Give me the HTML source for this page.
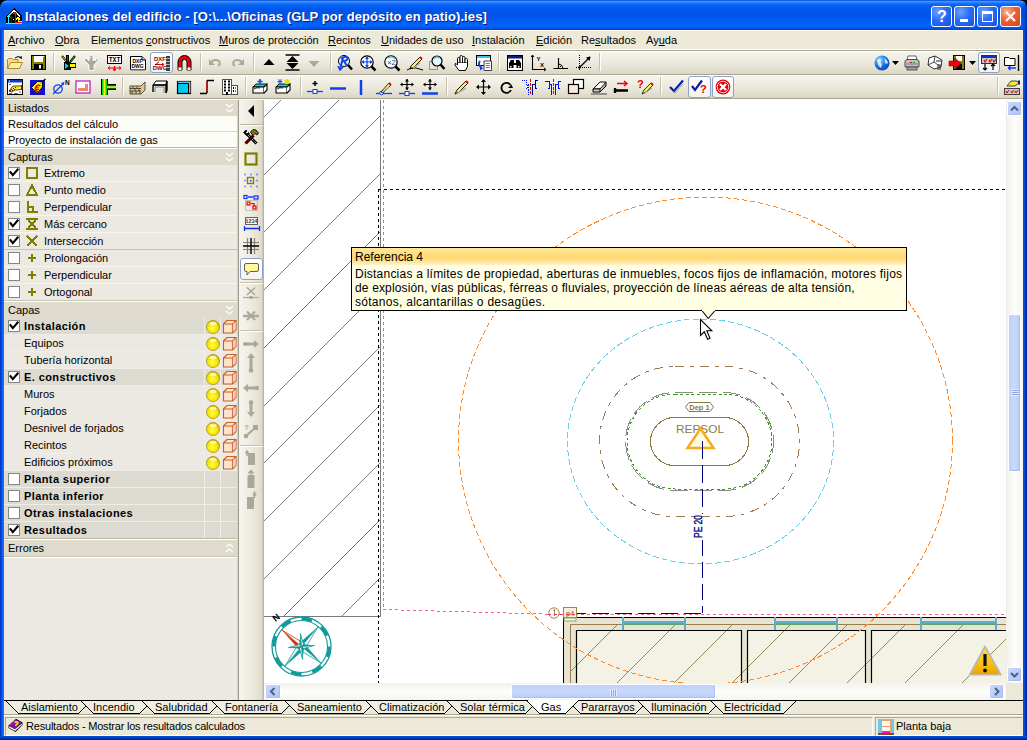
<!DOCTYPE html>
<html><head><meta charset="utf-8"><style>
*{margin:0;padding:0;box-sizing:border-box}
html,body{width:1027px;height:740px;overflow:hidden;background:#ECE9D8;font-family:"Liberation Sans", sans-serif;font-size:11px;color:#000;position:relative}
.a{position:absolute}
.t{position:absolute;white-space:nowrap}
.u{text-decoration:underline;text-underline-offset:1px}
svg{position:absolute;overflow:visible}
</style></head><body>

<div class="a" style="left:0;top:0;width:7px;height:7px;background:#000"></div>
<div class="a" style="left:1020px;top:0;width:7px;height:7px;background:#000"></div>
<div class="a" style="left:0;top:0;width:1027px;height:30px;background:linear-gradient(to bottom,#0040D0 0px,#3D95FF 1.5px,#0B6AF5 4px,#0058EE 8px,#0054E9 16px,#0061F7 24px,#0066FF 26px,#0055E5 28px,#003DD7 30px);border-radius:8px 8px 0 0"></div>
<div class="a" style="left:1021px;top:3px;width:6px;height:27px;background:linear-gradient(to right,rgba(0,40,180,0) 0px,rgba(0,30,150,0.6) 6px);border-top-right-radius:4px"></div>
<div class="a" style="left:0;top:30px;width:4px;height:710px;background:linear-gradient(to right,#0026B0 0px,#0049D9 1px,#0059F0 2px,#1A6CF6 3px,#1A6CF6 4px)"></div>
<div class="a" style="left:1023px;top:30px;width:4px;height:710px;background:linear-gradient(to right,#0058EE 0px,#0040C8 2px,#001E9A 4px)"></div>
<div class="a" style="left:0;top:736px;width:1027px;height:4px;background:linear-gradient(to bottom,#0050E0 0px,#003BC0 2px,#001A90 4px)"></div>
<svg style="left:6px;top:8px" width="16" height="16" viewBox="0 0 16 16" shape-rendering="crispEdges">
<path d="M0 15 V8 L8 0 L16 8 V15 Z" fill="#000"/>
<path d="M2.5 8 L8 2.5 L14 8.5" stroke="#fff" stroke-width="1.5" fill="none"/>
<path d="M2.5 8 L6 4.5" stroke="#20FFFF" stroke-width="1.5" fill="none"/>
<rect x="5" y="11" width="1" height="1" fill="#fff"/><rect x="7" y="11" width="1" height="1" fill="#fff"/><rect x="10" y="11" width="1" height="1" fill="#fff"/><rect x="13" y="11" width="1" height="1" fill="#fff"/>
<path d="M9 3.5 L7 6 H11 Z" fill="#f00"/><rect x="8.5" y="6" width="1.2" height="9" fill="#f00"/><rect x="8.5" y="14" width="7.5" height="1" fill="#f00"/>
<path d="M5.5 8 L3.8 10 H7.2 Z" fill="#1010ff"/><rect x="5" y="10" width="1.2" height="5" fill="#1010ff"/>
<path d="M12 8.5 L10.3 10.5 H13.7 Z" fill="#ffff00"/><rect x="11.5" y="10.5" width="1.2" height="3" fill="#ffff00"/><rect x="11.5" y="13" width="4.5" height="1" fill="#ffff00"/>
<path d="M2.5 6.5 L0.8 8.5 H4.2 Z" fill="#20FFFF"/><rect x="2" y="8.5" width="1.2" height="6.5" fill="#20FFFF"/>
<rect x="0" y="15" width="16" height="1" fill="#20FFFF"/>
</svg>
<div class="t" style="left:25px;top:9px;font-size:13px;line-height:15px;font-weight:bold;color:#fff;text-shadow:1px 1px 0 #0A1E7A;letter-spacing:0.1px">Instalaciones del edificio - [O:\...\Oficinas (GLP por depósito en patio).ies]</div>
<div class="a" style="left:931px;top:6px;width:21px;height:21px;border:1px solid #fff;border-radius:3px;background:radial-gradient(circle at 30% 25%,#6FA0FF 0%,#2A6CF4 45%,#1650E0 100%)"><div class="t" style="left:5px;top:1px;font-size:16px;line-height:18px;font-weight:bold;color:#fff">?</div></div>
<div class="a" style="left:954px;top:6px;width:21px;height:21px;border:1px solid #fff;border-radius:3px;background:radial-gradient(circle at 30% 25%,#6FA0FF 0%,#2A6CF4 45%,#1650E0 100%)"><div class="a" style="left:5px;top:12px;width:8px;height:3px;background:#fff"></div></div>
<div class="a" style="left:977px;top:6px;width:21px;height:21px;border:1px solid #fff;border-radius:3px;background:radial-gradient(circle at 30% 25%,#6FA0FF 0%,#2A6CF4 45%,#1650E0 100%)"><div class="a" style="left:4px;top:4px;width:11px;height:11px;border:1px solid #fff;border-top-width:3px"></div></div>
<div class="a" style="left:1000px;top:6px;width:21px;height:21px;border:1px solid #fff;border-radius:3px;background:radial-gradient(circle at 30% 25%,#F8B090 0%,#E8613A 45%,#D2421B 100%)"><svg style="left:4px;top:4px" width="11" height="11"><path d="M1 1 L10 10 M10 1 L1 10" stroke="#fff" stroke-width="2.2"/></svg></div>
<div class="a" style="left:4px;top:30px;width:1019px;height:19px;background:#ECE9D8"></div>
<div class="a" style="left:4px;top:30px;width:1019px;height:1px;background:#FFFBF0"></div>
<div class="t" style="left:8px;top:34.69px;font-size:11px;line-height:11px;font-weight:normal;color:#000;"><span class="u">A</span>rchivo</div>
<div class="t" style="left:55px;top:34.69px;font-size:11px;line-height:11px;font-weight:normal;color:#000;"><span class="u">O</span>bra</div>
<div class="t" style="left:91px;top:34.69px;font-size:11px;line-height:11px;font-weight:normal;color:#000;">Elementos <span class="u">c</span>onstructivos</div>
<div class="t" style="left:219px;top:34.69px;font-size:11px;line-height:11px;font-weight:normal;color:#000;"><span class="u">M</span>uros de protección</div>
<div class="t" style="left:328px;top:34.69px;font-size:11px;line-height:11px;font-weight:normal;color:#000;"><span class="u">R</span>ecintos</div>
<div class="t" style="left:381px;top:34.69px;font-size:11px;line-height:11px;font-weight:normal;color:#000;"><span class="u">U</span>nidades de uso</div>
<div class="t" style="left:472px;top:34.69px;font-size:11px;line-height:11px;font-weight:normal;color:#000;"><span class="u">I</span>nstalación</div>
<div class="t" style="left:536px;top:34.69px;font-size:11px;line-height:11px;font-weight:normal;color:#000;"><span class="u">E</span>dición</div>
<div class="t" style="left:581px;top:34.69px;font-size:11px;line-height:11px;font-weight:normal;color:#000;">Re<span class="u">s</span>ultados</div>
<div class="t" style="left:646px;top:34.69px;font-size:11px;line-height:11px;font-weight:normal;color:#000;">Ay<span class="u">u</span>da</div>
<div class="a" style="left:4px;top:49px;width:1019px;height:1px;background:#FFFFFF"></div>
<div class="a" style="left:4px;top:50px;width:1019px;height:1px;background:#A9A592"></div>
<div class="a" style="left:4px;top:51px;width:1019px;height:1px;background:#FFFFFF"></div>
<div class="a" style="left:4px;top:52px;width:1019px;height:22px;background:linear-gradient(to bottom,#F5F4EC 0%,#EFEDE2 35%,#E6E3D5 70%,#DAD6C4 100%)"></div>
<div class="a" style="left:4px;top:74px;width:1019px;height:1px;background:#A9A592"></div>
<div class="a" style="left:4px;top:75px;width:1019px;height:1px;background:#FFFFFF"></div>
<div class="a" style="left:4px;top:76px;width:1019px;height:22px;background:linear-gradient(to bottom,#F5F4EC 0%,#EFEDE2 35%,#E6E3D5 70%,#DAD6C4 100%)"></div>
<div class="a" style="left:4px;top:98px;width:1019px;height:1px;background:#A9A592"></div>
<div class="a" style="left:4px;top:99px;width:1019px;height:1px;background:#FFFFFF"></div>
<div class="a" style="left:4px;top:100px;width:234px;height:600px;background:#EBE9E2"></div>
<div class="a" style="left:237px;top:100px;width:1px;height:600px;background:#D6D2C2"></div>
<div class="a" style="left:238px;top:100px;width:1px;height:600px;background:#A09C8C"></div>
<div class="a" style="left:4px;top:100px;width:233px;height:16px;background:#DEDBCD"></div>
<div class="t" style="left:8px;top:102.69px;font-size:11px;line-height:11px;font-weight:normal;color:#000;">Listados</div>
<svg style="left:225px;top:103px" width="10" height="11"><path d="M1 1 L4.5 4 L8 1 M1 6 L4.5 9 L8 6" stroke="#fff" stroke-width="1.3" fill="none"/></svg>
<div class="a" style="left:4px;top:116px;width:233px;height:32px;background:#FDFDF8"></div>
<div class="a" style="left:4px;top:131px;width:233px;height:1px;background:#DCD8C8"></div>
<div class="a" style="left:4px;top:147px;width:233px;height:1px;background:#BEB9A6"></div>
<div class="t" style="left:8px;top:118.69px;font-size:11px;line-height:11px;font-weight:normal;color:#000;">Resultados del cálculo</div>
<div class="t" style="left:8px;top:134.69px;font-size:11px;line-height:11px;font-weight:normal;color:#000;">Proyecto de instalación de gas</div>
<div class="a" style="left:4px;top:148px;width:233px;height:1px;background:#FFFFFF"></div>
<div class="a" style="left:4px;top:149px;width:233px;height:16px;background:#DEDBCD"></div>
<div class="t" style="left:8px;top:151.69px;font-size:11px;line-height:11px;font-weight:normal;color:#000;">Capturas</div>
<svg style="left:225px;top:152px" width="10" height="11"><path d="M1 1 L4.5 4 L8 1 M1 6 L4.5 9 L8 6" stroke="#fff" stroke-width="1.3" fill="none"/></svg>
<div class="a" style="left:4px;top:165px;width:233px;height:16px;background:#EBE9E1"></div>
<div class="a" style="left:4px;top:181px;width:233px;height:1px;background:#F7F5EC"></div>
<div class="a" style="left:8px;top:167px;width:12px;height:12px;border:1px solid #858585;background:#fff"></div>
<svg style="left:8px;top:167px" width="12" height="12"><path d="M2.5 5.2 L4.8 8.2 L9.6 2.6" stroke="#000" stroke-width="2.1" fill="none" stroke-linecap="square"/></svg>
<svg style="left:26px;top:167px" width="12" height="12" shape-rendering="crispEdges"><rect x="1" y="1" width="10" height="10" fill="none" stroke="#808000" stroke-width="2"/></svg>
<div class="t" style="left:44px;top:167.69px;font-size:11px;line-height:11px;font-weight:normal;color:#000;">Extremo</div>
<div class="a" style="left:4px;top:182px;width:233px;height:16px;background:#EBE9E1"></div>
<div class="a" style="left:4px;top:198px;width:233px;height:1px;background:#F7F5EC"></div>
<div class="a" style="left:8px;top:184px;width:12px;height:12px;border:1px solid #858585;background:#fff"></div>
<svg style="left:26px;top:184px" width="12" height="12" shape-rendering="crispEdges"><path d="M6 1.5 L11 11 H1 Z" fill="none" stroke="#808000" stroke-width="2" stroke-linejoin="miter"/></svg>
<div class="t" style="left:44px;top:184.69px;font-size:11px;line-height:11px;font-weight:normal;color:#000;">Punto medio</div>
<div class="a" style="left:4px;top:199px;width:233px;height:16px;background:#EBE9E1"></div>
<div class="a" style="left:4px;top:215px;width:233px;height:1px;background:#F7F5EC"></div>
<div class="a" style="left:8px;top:201px;width:12px;height:12px;border:1px solid #858585;background:#fff"></div>
<svg style="left:26px;top:201px" width="12" height="12" shape-rendering="crispEdges"><path d="M2 0 V11 H12 M2 6 H7 V11" fill="none" stroke="#808000" stroke-width="2"/></svg>
<div class="t" style="left:44px;top:201.69px;font-size:11px;line-height:11px;font-weight:normal;color:#000;">Perpendicular</div>
<div class="a" style="left:4px;top:216px;width:233px;height:16px;background:#EBE9E1"></div>
<div class="a" style="left:4px;top:232px;width:233px;height:1px;background:#F7F5EC"></div>
<div class="a" style="left:8px;top:218px;width:12px;height:12px;border:1px solid #858585;background:#fff"></div>
<svg style="left:8px;top:218px" width="12" height="12"><path d="M2.5 5.2 L4.8 8.2 L9.6 2.6" stroke="#000" stroke-width="2.1" fill="none" stroke-linecap="square"/></svg>
<svg style="left:26px;top:218px" width="12" height="12" shape-rendering="crispEdges"><path d="M0 1 H12 M0 11 H12 M2 1.5 L10 10.5 M10 1.5 L2 10.5" fill="none" stroke="#808000" stroke-width="2"/></svg>
<div class="t" style="left:44px;top:218.69px;font-size:11px;line-height:11px;font-weight:normal;color:#000;">Más cercano</div>
<div class="a" style="left:4px;top:233px;width:233px;height:16px;background:#EBE9E1"></div>
<div class="a" style="left:4px;top:249px;width:233px;height:1px;background:#C8C4B4"></div>
<div class="a" style="left:8px;top:235px;width:12px;height:12px;border:1px solid #858585;background:#fff"></div>
<svg style="left:8px;top:235px" width="12" height="12"><path d="M2.5 5.2 L4.8 8.2 L9.6 2.6" stroke="#000" stroke-width="2.1" fill="none" stroke-linecap="square"/></svg>
<svg style="left:26px;top:235px" width="12" height="12" shape-rendering="crispEdges"><path d="M1 1 L11 11 M11 1 L1 11" fill="none" stroke="#808000" stroke-width="2"/></svg>
<div class="t" style="left:44px;top:235.69px;font-size:11px;line-height:11px;font-weight:normal;color:#000;">Intersección</div>
<div class="a" style="left:4px;top:250px;width:233px;height:16px;background:#EBE9E1"></div>
<div class="a" style="left:4px;top:266px;width:233px;height:1px;background:#F7F5EC"></div>
<div class="a" style="left:8px;top:252px;width:12px;height:12px;border:1px solid #858585;background:#fff"></div>
<svg style="left:26px;top:252px" width="12" height="12" shape-rendering="crispEdges"><path d="M6 2 V10 M2 6 H10" fill="none" stroke="#808000" stroke-width="2"/></svg>
<div class="t" style="left:44px;top:252.69px;font-size:11px;line-height:11px;font-weight:normal;color:#000;">Prolongación</div>
<div class="a" style="left:4px;top:267px;width:233px;height:16px;background:#EBE9E1"></div>
<div class="a" style="left:4px;top:283px;width:233px;height:1px;background:#F7F5EC"></div>
<div class="a" style="left:8px;top:269px;width:12px;height:12px;border:1px solid #858585;background:#fff"></div>
<svg style="left:26px;top:269px" width="12" height="12" shape-rendering="crispEdges"><path d="M6 2 V10 M2 6 H10" fill="none" stroke="#808000" stroke-width="2"/></svg>
<div class="t" style="left:44px;top:269.69px;font-size:11px;line-height:11px;font-weight:normal;color:#000;">Perpendicular</div>
<div class="a" style="left:4px;top:284px;width:233px;height:16px;background:#EBE9E1"></div>
<div class="a" style="left:4px;top:300px;width:233px;height:1px;background:#F7F5EC"></div>
<div class="a" style="left:8px;top:286px;width:12px;height:12px;border:1px solid #858585;background:#fff"></div>
<svg style="left:26px;top:286px" width="12" height="12" shape-rendering="crispEdges"><path d="M6 2 V10 M2 6 H10" fill="none" stroke="#808000" stroke-width="2"/></svg>
<div class="t" style="left:44px;top:286.69px;font-size:11px;line-height:11px;font-weight:normal;color:#000;">Ortogonal</div>
<div class="a" style="left:4px;top:300px;width:233px;height:1px;background:#C8C4B4"></div>
<div class="a" style="left:4px;top:301px;width:233px;height:1px;background:#FFFFFF"></div>
<div class="a" style="left:4px;top:302px;width:233px;height:16px;background:#DEDBCD"></div>
<div class="t" style="left:8px;top:304.69px;font-size:11px;line-height:11px;font-weight:normal;color:#000;">Capas</div>
<svg style="left:225px;top:305px" width="10" height="11"><path d="M1 1 L4.5 4 L8 1 M1 6 L4.5 9 L8 6" stroke="#fff" stroke-width="1.3" fill="none"/></svg>
<div class="a" style="left:4px;top:318px;width:201px;height:16px;background:#DCDAD1"></div>
<div class="a" style="left:205px;top:318px;width:16px;height:16px;background:#DCDAD1"></div>
<div class="a" style="left:221px;top:318px;width:16px;height:16px;background:#DCDAD1"></div>
<div class="a" style="left:204px;top:318px;width:1px;height:17px;background:#EFEDE5"></div>
<div class="a" style="left:220px;top:318px;width:1px;height:17px;background:#EFEDE5"></div>
<div class="a" style="left:4px;top:334px;width:233px;height:1px;background:#EFEDE5"></div>
<div class="a" style="left:8px;top:320px;width:12px;height:12px;border:1px solid #858585;background:#fff"></div>
<svg style="left:8px;top:320px" width="12" height="12"><path d="M2.5 5.2 L4.8 8.2 L9.6 2.6" stroke="#000" stroke-width="2.1" fill="none" stroke-linecap="square"/></svg>
<div class="t" style="left:24px;top:320.69px;font-size:11px;line-height:11px;font-weight:bold;color:#000;letter-spacing:0.4px">Instalación</div>
<svg style="left:206px;top:319px" width="15" height="15"><defs><radialGradient id="yg" cx="0.45" cy="0.6" r="0.6"><stop offset="0" stop-color="#FFFF40"/><stop offset="0.7" stop-color="#F5E000"/><stop offset="1" stop-color="#C8A800"/></radialGradient></defs>
<circle cx="7" cy="8" r="6.5" fill="url(#yg)" stroke="#B09000" stroke-width="0.8"/><ellipse cx="7" cy="4.5" rx="3.5" ry="1.8" fill="#FFFFC8" opacity="0.8"/></svg>
<svg style="left:222px;top:319px" width="15" height="15"><path d="M1.5 5 L5 1.5 H14 V10.5 L10.5 14 H1.5 Z" fill="#FCE4D0" stroke="#C8601A" stroke-width="1.1"/><path d="M1.5 5 H10.5 V14 M10.5 5 L14 1.5" fill="none" stroke="#C8601A" stroke-width="1.1"/><path d="M10.8 5.2 L13.6 2.4 V10.2 L10.8 13 Z" fill="#F8C8D0"/></svg>
<div class="a" style="left:4px;top:335px;width:201px;height:16px;background:#EBE9E1"></div>
<div class="a" style="left:205px;top:335px;width:16px;height:16px;background:#EBE9E1"></div>
<div class="a" style="left:221px;top:335px;width:16px;height:16px;background:#EBE9E1"></div>
<div class="a" style="left:204px;top:335px;width:1px;height:17px;background:#EFEDE5"></div>
<div class="a" style="left:220px;top:335px;width:1px;height:17px;background:#EFEDE5"></div>
<div class="a" style="left:4px;top:351px;width:233px;height:1px;background:#EFEDE5"></div>
<div class="t" style="left:24px;top:337.69px;font-size:11px;line-height:11px;font-weight:normal;color:#000;">Equipos</div>
<svg style="left:206px;top:336px" width="15" height="15"><defs><radialGradient id="yg" cx="0.45" cy="0.6" r="0.6"><stop offset="0" stop-color="#FFFF40"/><stop offset="0.7" stop-color="#F5E000"/><stop offset="1" stop-color="#C8A800"/></radialGradient></defs>
<circle cx="7" cy="8" r="6.5" fill="url(#yg)" stroke="#B09000" stroke-width="0.8"/><ellipse cx="7" cy="4.5" rx="3.5" ry="1.8" fill="#FFFFC8" opacity="0.8"/></svg>
<svg style="left:222px;top:336px" width="15" height="15"><path d="M1.5 5 L5 1.5 H14 V10.5 L10.5 14 H1.5 Z" fill="#FCE4D0" stroke="#C8601A" stroke-width="1.1"/><path d="M1.5 5 H10.5 V14 M10.5 5 L14 1.5" fill="none" stroke="#C8601A" stroke-width="1.1"/><path d="M10.8 5.2 L13.6 2.4 V10.2 L10.8 13 Z" fill="#F8C8D0"/></svg>
<div class="a" style="left:4px;top:352px;width:201px;height:16px;background:#EBE9E1"></div>
<div class="a" style="left:205px;top:352px;width:16px;height:16px;background:#EBE9E1"></div>
<div class="a" style="left:221px;top:352px;width:16px;height:16px;background:#EBE9E1"></div>
<div class="a" style="left:204px;top:352px;width:1px;height:17px;background:#EFEDE5"></div>
<div class="a" style="left:220px;top:352px;width:1px;height:17px;background:#EFEDE5"></div>
<div class="a" style="left:4px;top:368px;width:233px;height:1px;background:#EFEDE5"></div>
<div class="t" style="left:24px;top:354.69px;font-size:11px;line-height:11px;font-weight:normal;color:#000;">Tubería horizontal</div>
<svg style="left:206px;top:353px" width="15" height="15"><defs><radialGradient id="yg" cx="0.45" cy="0.6" r="0.6"><stop offset="0" stop-color="#FFFF40"/><stop offset="0.7" stop-color="#F5E000"/><stop offset="1" stop-color="#C8A800"/></radialGradient></defs>
<circle cx="7" cy="8" r="6.5" fill="url(#yg)" stroke="#B09000" stroke-width="0.8"/><ellipse cx="7" cy="4.5" rx="3.5" ry="1.8" fill="#FFFFC8" opacity="0.8"/></svg>
<svg style="left:222px;top:353px" width="15" height="15"><path d="M1.5 5 L5 1.5 H14 V10.5 L10.5 14 H1.5 Z" fill="#FCE4D0" stroke="#C8601A" stroke-width="1.1"/><path d="M1.5 5 H10.5 V14 M10.5 5 L14 1.5" fill="none" stroke="#C8601A" stroke-width="1.1"/><path d="M10.8 5.2 L13.6 2.4 V10.2 L10.8 13 Z" fill="#F8C8D0"/></svg>
<div class="a" style="left:4px;top:369px;width:201px;height:16px;background:#DCDAD1"></div>
<div class="a" style="left:205px;top:369px;width:16px;height:16px;background:#DCDAD1"></div>
<div class="a" style="left:221px;top:369px;width:16px;height:16px;background:#DCDAD1"></div>
<div class="a" style="left:204px;top:369px;width:1px;height:17px;background:#EFEDE5"></div>
<div class="a" style="left:220px;top:369px;width:1px;height:17px;background:#EFEDE5"></div>
<div class="a" style="left:4px;top:385px;width:233px;height:1px;background:#EFEDE5"></div>
<div class="a" style="left:8px;top:371px;width:12px;height:12px;border:1px solid #858585;background:#fff"></div>
<svg style="left:8px;top:371px" width="12" height="12"><path d="M2.5 5.2 L4.8 8.2 L9.6 2.6" stroke="#000" stroke-width="2.1" fill="none" stroke-linecap="square"/></svg>
<div class="t" style="left:24px;top:371.69px;font-size:11px;line-height:11px;font-weight:bold;color:#000;letter-spacing:0.4px">E. constructivos</div>
<svg style="left:206px;top:370px" width="15" height="15"><defs><radialGradient id="yg" cx="0.45" cy="0.6" r="0.6"><stop offset="0" stop-color="#FFFF40"/><stop offset="0.7" stop-color="#F5E000"/><stop offset="1" stop-color="#C8A800"/></radialGradient></defs>
<circle cx="7" cy="8" r="6.5" fill="url(#yg)" stroke="#B09000" stroke-width="0.8"/><ellipse cx="7" cy="4.5" rx="3.5" ry="1.8" fill="#FFFFC8" opacity="0.8"/></svg>
<svg style="left:222px;top:370px" width="15" height="15"><path d="M1.5 5 L5 1.5 H14 V10.5 L10.5 14 H1.5 Z" fill="#FCE4D0" stroke="#C8601A" stroke-width="1.1"/><path d="M1.5 5 H10.5 V14 M10.5 5 L14 1.5" fill="none" stroke="#C8601A" stroke-width="1.1"/><path d="M10.8 5.2 L13.6 2.4 V10.2 L10.8 13 Z" fill="#F8C8D0"/></svg>
<div class="a" style="left:4px;top:386px;width:201px;height:16px;background:#EBE9E1"></div>
<div class="a" style="left:205px;top:386px;width:16px;height:16px;background:#EBE9E1"></div>
<div class="a" style="left:221px;top:386px;width:16px;height:16px;background:#EBE9E1"></div>
<div class="a" style="left:204px;top:386px;width:1px;height:17px;background:#EFEDE5"></div>
<div class="a" style="left:220px;top:386px;width:1px;height:17px;background:#EFEDE5"></div>
<div class="a" style="left:4px;top:402px;width:233px;height:1px;background:#EFEDE5"></div>
<div class="t" style="left:24px;top:388.69px;font-size:11px;line-height:11px;font-weight:normal;color:#000;">Muros</div>
<svg style="left:206px;top:387px" width="15" height="15"><defs><radialGradient id="yg" cx="0.45" cy="0.6" r="0.6"><stop offset="0" stop-color="#FFFF40"/><stop offset="0.7" stop-color="#F5E000"/><stop offset="1" stop-color="#C8A800"/></radialGradient></defs>
<circle cx="7" cy="8" r="6.5" fill="url(#yg)" stroke="#B09000" stroke-width="0.8"/><ellipse cx="7" cy="4.5" rx="3.5" ry="1.8" fill="#FFFFC8" opacity="0.8"/></svg>
<svg style="left:222px;top:387px" width="15" height="15"><path d="M1.5 5 L5 1.5 H14 V10.5 L10.5 14 H1.5 Z" fill="#FCE4D0" stroke="#C8601A" stroke-width="1.1"/><path d="M1.5 5 H10.5 V14 M10.5 5 L14 1.5" fill="none" stroke="#C8601A" stroke-width="1.1"/><path d="M10.8 5.2 L13.6 2.4 V10.2 L10.8 13 Z" fill="#F8C8D0"/></svg>
<div class="a" style="left:4px;top:403px;width:201px;height:16px;background:#EBE9E1"></div>
<div class="a" style="left:205px;top:403px;width:16px;height:16px;background:#EBE9E1"></div>
<div class="a" style="left:221px;top:403px;width:16px;height:16px;background:#EBE9E1"></div>
<div class="a" style="left:204px;top:403px;width:1px;height:17px;background:#EFEDE5"></div>
<div class="a" style="left:220px;top:403px;width:1px;height:17px;background:#EFEDE5"></div>
<div class="a" style="left:4px;top:419px;width:233px;height:1px;background:#EFEDE5"></div>
<div class="t" style="left:24px;top:405.69px;font-size:11px;line-height:11px;font-weight:normal;color:#000;">Forjados</div>
<svg style="left:206px;top:404px" width="15" height="15"><defs><radialGradient id="yg" cx="0.45" cy="0.6" r="0.6"><stop offset="0" stop-color="#FFFF40"/><stop offset="0.7" stop-color="#F5E000"/><stop offset="1" stop-color="#C8A800"/></radialGradient></defs>
<circle cx="7" cy="8" r="6.5" fill="url(#yg)" stroke="#B09000" stroke-width="0.8"/><ellipse cx="7" cy="4.5" rx="3.5" ry="1.8" fill="#FFFFC8" opacity="0.8"/></svg>
<svg style="left:222px;top:404px" width="15" height="15"><path d="M1.5 5 L5 1.5 H14 V10.5 L10.5 14 H1.5 Z" fill="#FCE4D0" stroke="#C8601A" stroke-width="1.1"/><path d="M1.5 5 H10.5 V14 M10.5 5 L14 1.5" fill="none" stroke="#C8601A" stroke-width="1.1"/><path d="M10.8 5.2 L13.6 2.4 V10.2 L10.8 13 Z" fill="#F8C8D0"/></svg>
<div class="a" style="left:4px;top:420px;width:201px;height:16px;background:#EBE9E1"></div>
<div class="a" style="left:205px;top:420px;width:16px;height:16px;background:#EBE9E1"></div>
<div class="a" style="left:221px;top:420px;width:16px;height:16px;background:#EBE9E1"></div>
<div class="a" style="left:204px;top:420px;width:1px;height:17px;background:#EFEDE5"></div>
<div class="a" style="left:220px;top:420px;width:1px;height:17px;background:#EFEDE5"></div>
<div class="a" style="left:4px;top:436px;width:233px;height:1px;background:#EFEDE5"></div>
<div class="t" style="left:24px;top:422.69px;font-size:11px;line-height:11px;font-weight:normal;color:#000;">Desnivel de forjados</div>
<svg style="left:206px;top:421px" width="15" height="15"><defs><radialGradient id="yg" cx="0.45" cy="0.6" r="0.6"><stop offset="0" stop-color="#FFFF40"/><stop offset="0.7" stop-color="#F5E000"/><stop offset="1" stop-color="#C8A800"/></radialGradient></defs>
<circle cx="7" cy="8" r="6.5" fill="url(#yg)" stroke="#B09000" stroke-width="0.8"/><ellipse cx="7" cy="4.5" rx="3.5" ry="1.8" fill="#FFFFC8" opacity="0.8"/></svg>
<svg style="left:222px;top:421px" width="15" height="15"><path d="M1.5 5 L5 1.5 H14 V10.5 L10.5 14 H1.5 Z" fill="#FCE4D0" stroke="#C8601A" stroke-width="1.1"/><path d="M1.5 5 H10.5 V14 M10.5 5 L14 1.5" fill="none" stroke="#C8601A" stroke-width="1.1"/><path d="M10.8 5.2 L13.6 2.4 V10.2 L10.8 13 Z" fill="#F8C8D0"/></svg>
<div class="a" style="left:4px;top:437px;width:201px;height:16px;background:#EBE9E1"></div>
<div class="a" style="left:205px;top:437px;width:16px;height:16px;background:#EBE9E1"></div>
<div class="a" style="left:221px;top:437px;width:16px;height:16px;background:#EBE9E1"></div>
<div class="a" style="left:204px;top:437px;width:1px;height:17px;background:#EFEDE5"></div>
<div class="a" style="left:220px;top:437px;width:1px;height:17px;background:#EFEDE5"></div>
<div class="a" style="left:4px;top:453px;width:233px;height:1px;background:#EFEDE5"></div>
<div class="t" style="left:24px;top:439.69px;font-size:11px;line-height:11px;font-weight:normal;color:#000;">Recintos</div>
<svg style="left:206px;top:438px" width="15" height="15"><defs><radialGradient id="yg" cx="0.45" cy="0.6" r="0.6"><stop offset="0" stop-color="#FFFF40"/><stop offset="0.7" stop-color="#F5E000"/><stop offset="1" stop-color="#C8A800"/></radialGradient></defs>
<circle cx="7" cy="8" r="6.5" fill="url(#yg)" stroke="#B09000" stroke-width="0.8"/><ellipse cx="7" cy="4.5" rx="3.5" ry="1.8" fill="#FFFFC8" opacity="0.8"/></svg>
<svg style="left:222px;top:438px" width="15" height="15"><path d="M1.5 5 L5 1.5 H14 V10.5 L10.5 14 H1.5 Z" fill="#FCE4D0" stroke="#C8601A" stroke-width="1.1"/><path d="M1.5 5 H10.5 V14 M10.5 5 L14 1.5" fill="none" stroke="#C8601A" stroke-width="1.1"/><path d="M10.8 5.2 L13.6 2.4 V10.2 L10.8 13 Z" fill="#F8C8D0"/></svg>
<div class="a" style="left:4px;top:454px;width:201px;height:16px;background:#EBE9E1"></div>
<div class="a" style="left:205px;top:454px;width:16px;height:16px;background:#EBE9E1"></div>
<div class="a" style="left:221px;top:454px;width:16px;height:16px;background:#EBE9E1"></div>
<div class="a" style="left:204px;top:454px;width:1px;height:17px;background:#EFEDE5"></div>
<div class="a" style="left:220px;top:454px;width:1px;height:17px;background:#EFEDE5"></div>
<div class="a" style="left:4px;top:470px;width:233px;height:1px;background:#EFEDE5"></div>
<div class="t" style="left:24px;top:456.69px;font-size:11px;line-height:11px;font-weight:normal;color:#000;">Edificios próximos</div>
<svg style="left:206px;top:455px" width="15" height="15"><defs><radialGradient id="yg" cx="0.45" cy="0.6" r="0.6"><stop offset="0" stop-color="#FFFF40"/><stop offset="0.7" stop-color="#F5E000"/><stop offset="1" stop-color="#C8A800"/></radialGradient></defs>
<circle cx="7" cy="8" r="6.5" fill="url(#yg)" stroke="#B09000" stroke-width="0.8"/><ellipse cx="7" cy="4.5" rx="3.5" ry="1.8" fill="#FFFFC8" opacity="0.8"/></svg>
<svg style="left:222px;top:455px" width="15" height="15"><path d="M1.5 5 L5 1.5 H14 V10.5 L10.5 14 H1.5 Z" fill="#FCE4D0" stroke="#C8601A" stroke-width="1.1"/><path d="M1.5 5 H10.5 V14 M10.5 5 L14 1.5" fill="none" stroke="#C8601A" stroke-width="1.1"/><path d="M10.8 5.2 L13.6 2.4 V10.2 L10.8 13 Z" fill="#F8C8D0"/></svg>
<div class="a" style="left:4px;top:471px;width:201px;height:16px;background:#DCDAD1"></div>
<div class="a" style="left:205px;top:471px;width:16px;height:16px;background:#DCDAD1"></div>
<div class="a" style="left:221px;top:471px;width:16px;height:16px;background:#DCDAD1"></div>
<div class="a" style="left:204px;top:471px;width:1px;height:17px;background:#EFEDE5"></div>
<div class="a" style="left:220px;top:471px;width:1px;height:17px;background:#EFEDE5"></div>
<div class="a" style="left:4px;top:487px;width:233px;height:1px;background:#EFEDE5"></div>
<div class="a" style="left:8px;top:473px;width:12px;height:12px;border:1px solid #858585;background:#fff"></div>
<div class="t" style="left:24px;top:473.69px;font-size:11px;line-height:11px;font-weight:bold;color:#000;letter-spacing:0.4px">Planta superior</div>
<div class="a" style="left:4px;top:488px;width:201px;height:16px;background:#DCDAD1"></div>
<div class="a" style="left:205px;top:488px;width:16px;height:16px;background:#DCDAD1"></div>
<div class="a" style="left:221px;top:488px;width:16px;height:16px;background:#DCDAD1"></div>
<div class="a" style="left:204px;top:488px;width:1px;height:17px;background:#EFEDE5"></div>
<div class="a" style="left:220px;top:488px;width:1px;height:17px;background:#EFEDE5"></div>
<div class="a" style="left:4px;top:504px;width:233px;height:1px;background:#EFEDE5"></div>
<div class="a" style="left:8px;top:490px;width:12px;height:12px;border:1px solid #858585;background:#fff"></div>
<div class="t" style="left:24px;top:490.69px;font-size:11px;line-height:11px;font-weight:bold;color:#000;letter-spacing:0.4px">Planta inferior</div>
<div class="a" style="left:4px;top:505px;width:201px;height:16px;background:#DCDAD1"></div>
<div class="a" style="left:205px;top:505px;width:16px;height:16px;background:#DCDAD1"></div>
<div class="a" style="left:221px;top:505px;width:16px;height:16px;background:#DCDAD1"></div>
<div class="a" style="left:204px;top:505px;width:1px;height:17px;background:#EFEDE5"></div>
<div class="a" style="left:220px;top:505px;width:1px;height:17px;background:#EFEDE5"></div>
<div class="a" style="left:4px;top:521px;width:233px;height:1px;background:#EFEDE5"></div>
<div class="a" style="left:8px;top:507px;width:12px;height:12px;border:1px solid #858585;background:#fff"></div>
<div class="t" style="left:24px;top:507.69px;font-size:11px;line-height:11px;font-weight:bold;color:#000;letter-spacing:0.4px">Otras instalaciones</div>
<div class="a" style="left:4px;top:522px;width:201px;height:16px;background:#DCDAD1"></div>
<div class="a" style="left:205px;top:522px;width:16px;height:16px;background:#DCDAD1"></div>
<div class="a" style="left:221px;top:522px;width:16px;height:16px;background:#DCDAD1"></div>
<div class="a" style="left:204px;top:522px;width:1px;height:17px;background:#EFEDE5"></div>
<div class="a" style="left:220px;top:522px;width:1px;height:17px;background:#EFEDE5"></div>
<div class="a" style="left:4px;top:538px;width:233px;height:1px;background:#EFEDE5"></div>
<div class="a" style="left:8px;top:524px;width:12px;height:12px;border:1px solid #858585;background:#fff"></div>
<svg style="left:8px;top:524px" width="12" height="12"><path d="M2.5 5.2 L4.8 8.2 L9.6 2.6" stroke="#000" stroke-width="2.1" fill="none" stroke-linecap="square"/></svg>
<div class="t" style="left:24px;top:524.69px;font-size:11px;line-height:11px;font-weight:bold;color:#000;letter-spacing:0.4px">Resultados</div>
<div class="a" style="left:4px;top:538px;width:233px;height:1px;background:#BEB9A6"></div>
<div class="a" style="left:4px;top:539px;width:233px;height:1px;background:#FFFFFF"></div>
<div class="a" style="left:4px;top:540px;width:233px;height:16px;background:#DEDBCD"></div>
<div class="t" style="left:8px;top:542.69px;font-size:11px;line-height:11px;font-weight:normal;color:#000;">Errores</div>
<svg style="left:225px;top:543px" width="10" height="11"><path d="M1 4 L4.5 1 L8 4 M1 9 L4.5 6 L8 9" stroke="#fff" stroke-width="1.3" fill="none"/></svg>
<div class="a" style="left:4px;top:556px;width:233px;height:1px;background:#C8C4B4"></div>
<div class="a" style="left:4px;top:557px;width:233px;height:1px;background:#FFFFFF"></div>
<div class="a" style="left:239px;top:100px;width:25px;height:600px;background:linear-gradient(to right,#F6F4EC 0%,#EFEDE2 40%,#E2DFCF 85%,#D4D0BC 100%)"></div>
<div class="a" style="left:262px;top:100px;width:1px;height:600px;background:#D0CCB8"></div>
<div class="a" style="left:263px;top:100px;width:1px;height:600px;background:#B8B4A0"></div>
<svg style="left:246px;top:104px" width="10" height="14"><path d="M8 1 L2 7 L8 13 Z" fill="#000"/></svg>
<div class="a" style="left:240px;top:124px;width:23px;height:1px;background:#B8B4A0"></div>
<div class="a" style="left:240px;top:125px;width:23px;height:1px;background:#FFFFFF"></div>
<svg style="left:264px;top:100px" width="742" height="583" viewBox="264 100 742 583"><defs><clipPath id="clipL"><rect x="264" y="100" width="116" height="516"/></clipPath><clipPath id="clipB"><rect x="570.5" y="624.5" width="436" height="60"/></clipPath><clipPath id="clipAll"><rect x="264" y="100" width="742" height="583"/></clipPath></defs><rect x="264" y="100" width="742" height="583" fill="#FFFFFF"/><g clip-path="url(#clipAll)"><g clip-path="url(#clipL)" stroke="#7A7A7A" stroke-width="1" shape-rendering="crispEdges"><line x1="166.0" y1="100" x2="-350.0" y2="616" /><line x1="223.0" y1="100" x2="-293.0" y2="616" /><line x1="281.0" y1="100" x2="-235.0" y2="616" /><line x1="339.0" y1="100" x2="-177.0" y2="616" /><line x1="396.0" y1="100" x2="-120.0" y2="616" /><line x1="454.0" y1="100" x2="-62.0" y2="616" /><line x1="512.0" y1="100" x2="-4.0" y2="616" /><line x1="570.0" y1="100" x2="54.0" y2="616" /><line x1="627.0" y1="100" x2="111.0" y2="616" /><line x1="685.0" y1="100" x2="169.0" y2="616" /><line x1="743.0" y1="100" x2="227.0" y2="616" /><line x1="800.0" y1="100" x2="284.0" y2="616" /><line x1="858.0" y1="100" x2="342.0" y2="616" /></g><line x1="380.5" y1="100" x2="380.5" y2="617" stroke="#7A7A7A" stroke-width="1"/><line x1="264" y1="616.5" x2="381" y2="616.5" stroke="#7A7A7A" stroke-width="1"/><line x1="383.5" y1="100" x2="383.5" y2="607" stroke="#FF5C8C" stroke-width="1" stroke-dasharray="3 3"/><path d="M383 609.5 L563 614.5 H1006" fill="none" stroke="#FF5C8C" stroke-width="1" stroke-dasharray="3 3" shape-rendering="crispEdges"/><line x1="378.5" y1="189" x2="378.5" y2="683" stroke="#000" stroke-width="1" stroke-dasharray="3 3"/><line x1="378" y1="189.5" x2="1006" y2="189.5" stroke="#000" stroke-width="1" stroke-dasharray="3 3"/><rect x="563" y="617" width="443" height="66" fill="#E8E4D2"/><rect x="576" y="630" width="165" height="53" fill="#F4F2E4"/><rect x="747" y="630" width="118" height="53" fill="#F4F2E4"/><rect x="871" y="630" width="135" height="53" fill="#F4F2E4"/><g clip-path="url(#clipB)" stroke="#8C8C5A" stroke-width="1" shape-rendering="crispEdges"><line x1="388.0" y1="624" x2="312.0" y2="700"/><line x1="445.0" y1="624" x2="369.0" y2="700"/><line x1="503.0" y1="624" x2="427.0" y2="700"/><line x1="560.0" y1="624" x2="484.0" y2="700"/><line x1="618.0" y1="624" x2="542.0" y2="700"/><line x1="676.0" y1="624" x2="600.0" y2="700"/><line x1="733.0" y1="624" x2="657.0" y2="700"/><line x1="791.0" y1="624" x2="715.0" y2="700"/><line x1="848.0" y1="624" x2="772.0" y2="700"/><line x1="906.0" y1="624" x2="830.0" y2="700"/><line x1="964.0" y1="624" x2="888.0" y2="700"/><line x1="1021.0" y1="624" x2="945.0" y2="700"/><line x1="1079.0" y1="624" x2="1003.0" y2="700"/><line x1="1136.0" y1="624" x2="1060.0" y2="700"/><line x1="1194.0" y1="624" x2="1118.0" y2="700"/><line x1="1252.0" y1="624" x2="1176.0" y2="700"/></g><path d="M563.5 683 V617.5 H1006" fill="none" stroke="#000" stroke-width="1"/><path d="M570.5 683 V624.5 H1006" fill="none" stroke="#9C7C50" stroke-width="1"/><path d="M576.5 683 V630.5 H741.5 V683 M747.5 683 V630.5 H865.5 V683 M871.5 683 V630.5 H1006" fill="none" stroke="#000" stroke-width="1.2"/><rect x="622" y="621" width="62" height="2" fill="#5AAFD0"/><rect x="622" y="623" width="62" height="1.5" fill="#20D080"/><rect x="622" y="617" width="2" height="13" fill="#5AAFD0"/><rect x="684" y="617" width="2" height="13" fill="#5AAFD0"/><rect x="774" y="621" width="62" height="2" fill="#5AAFD0"/><rect x="774" y="623" width="62" height="1.5" fill="#20D080"/><rect x="774" y="617" width="2" height="13" fill="#5AAFD0"/><rect x="836" y="617" width="2" height="13" fill="#5AAFD0"/><rect x="920" y="621" width="75" height="2" fill="#5AAFD0"/><rect x="920" y="623" width="75" height="1.5" fill="#20D080"/><rect x="920" y="617" width="2" height="13" fill="#5AAFD0"/><rect x="995" y="617" width="2" height="13" fill="#5AAFD0"/><ellipse cx="705.5" cy="440.5" rx="247" ry="243.5" fill="none" stroke="#FF8A28" stroke-width="1" stroke-dasharray="5 3" shape-rendering="crispEdges"/><ellipse cx="700.5" cy="441.5" rx="133" ry="122.5" fill="none" stroke="#66CCF0" stroke-width="1" stroke-dasharray="6 3" shape-rendering="crispEdges"/><path d="M674.5 366.5 H724.5 A75 75 0 0 1 724.5 516.5 H674.5 A75 75 0 0 1 674.5 366.5 Z" fill="none" stroke="#A07850" stroke-width="1" stroke-dasharray="9 6 4 6" shape-rendering="crispEdges"/><path d="M674.5 392.5 H724.5 A49 49 0 0 1 724.5 490.5 H674.5 A49 49 0 0 1 674.5 392.5 Z" fill="none" stroke="#8C8C8C" stroke-width="1" stroke-dasharray="18 6" shape-rendering="crispEdges"/><path d="M674.5 394.0 H724.5 A47.5 47.5 0 0 1 724.5 489.0 H674.5 A47.5 47.5 0 0 1 674.5 394.0 Z" fill="none" stroke="#3C9C18" stroke-width="1" stroke-dasharray="3 2.5" shape-rendering="crispEdges"/><path d="M674.5 417.5 H724.5 A24 24 0 0 1 724.5 465.5 H674.5 A24 24 0 0 1 674.5 417.5 Z" fill="none" stroke="#8C7840" stroke-width="1" shape-rendering="crispEdges"/><text x="676" y="433" font-family="Liberation Sans" font-size="11.3" fill="#8C7A48" textLength="48" lengthAdjust="spacingAndGlyphs">REPSOL</text><path d="M689 402.5 H710 L713.5 407 L710 411.5 H689 L685.5 407 Z" fill="#fff" stroke="#8C7840" stroke-width="1"/><text x="699.5" y="410" font-family="Liberation Sans" font-size="7.5" font-weight="bold" fill="#8C7840" text-anchor="middle">Dep 1</text><path d="M700.5 428.5 L713.5 448 H687.5 Z" fill="#FFFCE0" stroke="#F4AC1E" stroke-width="2.5" stroke-linejoin="miter"/><line x1="702.5" y1="441" x2="702.5" y2="459" stroke="#00007A" stroke-width="1" shape-rendering="crispEdges"/><line x1="702.5" y1="465" x2="702.5" y2="514" stroke="#00007A" stroke-width="1" stroke-dasharray="18 6" shape-rendering="crispEdges"/><line x1="702.5" y1="540" x2="702.5" y2="613" stroke="#00007A" stroke-width="1" stroke-dasharray="16 6" shape-rendering="crispEdges"/><line x1="701" y1="613.5" x2="576" y2="613.5" stroke="#00007A" stroke-width="1.6" stroke-dasharray="17 6" shape-rendering="crispEdges"/><text transform="translate(701.5,538) rotate(-90)" font-family="Liberation Sans" font-size="10" fill="#00007A" stroke="#00007A" stroke-width="0.35" textLength="23" lengthAdjust="spacingAndGlyphs">PE 20</text><circle cx="554" cy="613" r="5.2" fill="#fff" stroke="#9C8848" stroke-width="1"/><path d="M553 610.5 L554.5 609.5 V616" stroke="#9C8848" stroke-width="1" fill="none"/><rect x="563.5" y="607.5" width="13" height="10" fill="#FCEEE6" stroke="#9C8848" stroke-width="1"/><rect x="564" y="618" width="12" height="3" fill="#EEF6D4" stroke="#7CA050" stroke-width="0.8"/><text x="570" y="615.5" font-family="Liberation Sans" font-size="7" font-weight="bold" fill="#9C8848" text-anchor="middle">p4</text><path d="M548 614.5 H578" fill="none" stroke="#E8306A" stroke-width="1" stroke-dasharray="3 3" shape-rendering="crispEdges"/><defs><linearGradient id="wg" x1="0" y1="0" x2="0" y2="1"><stop offset="0" stop-color="#FFE040"/><stop offset="0.6" stop-color="#F8C010"/><stop offset="1" stop-color="#F0A000"/></linearGradient></defs><path d="M985 646.5 L1001 675 H969.5 Z" fill="url(#wg)" stroke="#B8B8B8" stroke-width="1.6" stroke-linejoin="round"/><path d="M969.5 675.5 H1001" stroke="#D8D8D8" stroke-width="1.2"/><path d="M985 654 V666" stroke="#101018" stroke-width="3.2"/><circle cx="985" cy="670.5" r="1.9" fill="#101018"/><g fill="none" stroke="#0E9A9A"><circle cx="301.5" cy="646.5" r="29.5" stroke-width="1.3"/><circle cx="301.5" cy="646.5" r="26" stroke-width="1.1"/></g><path d="M301.5 618.8 A27.75 27.75 0 0 1 311.9 620.8 M321.1 626.9 A27.75 27.75 0 0 1 327.0 635.7 M329.2 646.5 A27.75 27.75 0 0 1 327.2 656.9 M321.1 666.1 A27.75 27.75 0 0 1 312.3 672.0 M301.5 674.2 A27.75 27.75 0 0 1 291.1 672.2 M281.9 666.1 A27.75 27.75 0 0 1 276.0 657.3 M273.8 646.5 A27.75 27.75 0 0 1 275.8 636.1 M281.9 626.9 A27.75 27.75 0 0 1 290.7 621.0" fill="none" stroke="#0E9A9A" stroke-width="3"/><path d="M301.5 646.5 L298.4 643.9 L318.2 626.6 Z" fill="#0E9A9A"/><path d="M301.5 646.5 L304.6 649.1 L318.2 626.6 Z" fill="#fff" stroke="#0E9A9A" stroke-width="0.8"/><path d="M301.5 646.5 L304.1 643.4 L321.4 663.2 Z" fill="#0E9A9A"/><path d="M301.5 646.5 L298.9 649.6 L321.4 663.2 Z" fill="#fff" stroke="#0E9A9A" stroke-width="0.8"/><path d="M301.5 646.5 L304.6 649.1 L284.8 666.4 Z" fill="#0E9A9A"/><path d="M301.5 646.5 L298.4 643.9 L284.8 666.4 Z" fill="#fff" stroke="#0E9A9A" stroke-width="0.8"/><path d="M301.5 646.5 L298.9 649.6 L281.6 629.8 Z" fill="#D03A10"/><path d="M301.5 646.5 L304.1 643.4 L281.6 629.8 Z" fill="#fff" stroke="#D03A10" stroke-width="0.8"/><path d="M301.5 646.5 L299.2 644.6 L300.4 633.5 Z" fill="#0E9A9A"/><path d="M301.5 646.5 L303.4 644.2 L300.4 633.5 Z" fill="#fff" stroke="#0E9A9A" stroke-width="0.8"/><path d="M301.5 646.5 L303.4 644.2 L314.5 645.4 Z" fill="#0E9A9A"/><path d="M301.5 646.5 L303.8 648.4 L314.5 645.4 Z" fill="#fff" stroke="#0E9A9A" stroke-width="0.8"/><path d="M301.5 646.5 L303.8 648.4 L302.6 659.5 Z" fill="#0E9A9A"/><path d="M301.5 646.5 L299.6 648.8 L302.6 659.5 Z" fill="#fff" stroke="#0E9A9A" stroke-width="0.8"/><path d="M301.5 646.5 L299.6 648.8 L288.5 647.6 Z" fill="#0E9A9A"/><path d="M301.5 646.5 L299.2 644.6 L288.5 647.6 Z" fill="#fff" stroke="#0E9A9A" stroke-width="0.8"/><text transform="translate(275.5,622) rotate(-38)" font-family="Liberation Sans" font-size="9" font-weight="bold" fill="#000">N</text></g></svg>
<div class="a" style="left:351px;top:247px;width:556px;height:64px;border:1px solid #000;background:linear-gradient(to bottom,#FFFDE8 0px,#FFFFE1 100%)"></div>
<div class="a" style="left:352px;top:248px;width:554px;height:17px;background:linear-gradient(to bottom,#FFE89A 0px,#FFD870 60%,#FFE8A8 85%,#FFF3C8 100%)"></div>
<svg style="left:700px;top:309px" width="18" height="11"><path d="M1.5 1 L8.2 9.5 L15.5 1" fill="#FFFDE4" stroke="#000" stroke-width="1.1"/><rect x="2" y="0" width="13" height="2" fill="#FFFDE4"/></svg>
<div class="t" style="left:355px;top:250px;font-size:12px;line-height:14px">Referencia 4</div>
<div class="t" style="left:355px;top:267px;font-size:12px;line-height:14px;letter-spacing:0.23px">Distancias a límites de propiedad, aberturas de inmuebles, focos fijos de inflamación, motores fijos</div>
<div class="t" style="left:355px;top:281px;font-size:12px;line-height:14px;letter-spacing:0.15px">de explosión, vías públicas, férreas o fluviales, proyección de líneas aéreas de alta tensión,</div>
<div class="t" style="left:355px;top:295px;font-size:12px;line-height:14px;letter-spacing:0.28px">sótanos, alcantarillas o desagües.</div>
<svg style="left:700px;top:319px" width="14" height="23"><path d="M0.5 0.5 V16.5 L4.3 12.8 L7.6 20.3 L10 19.3 L6.8 11.8 H11.8 Z" fill="#fff" stroke="#000" stroke-width="1.1"/></svg>
<div class="a" style="left:1006px;top:100px;width:17px;height:583px;background:linear-gradient(to right,#F3F1EA 0%,#FDFDFA 50%,#F6F5EF 100%)"></div>
<div class="a" style="left:1006px;top:100px;width:1px;height:583px;background:#EEEDE5"></div>
<div class="a" style="left:1007px;top:101px;width:15px;height:15px;border:1px solid #FFFFFF;border-radius:2px;background:linear-gradient(135deg,#C8D8FC 0%,#BCCEFA 50%,#B0C4F8 100%);box-shadow:inset -1px -1px 0 #A8BDF0"></div>
<svg style="left:1007px;top:101px" width="15" height="15"><path d="M4 9.5 L7.5 6 L11 9.5" fill="none" stroke="#4D6185" stroke-width="2"/></svg>
<div class="a" style="left:1007px;top:667px;width:15px;height:15px;border:1px solid #FFFFFF;border-radius:2px;background:linear-gradient(135deg,#C8D8FC 0%,#BCCEFA 50%,#B0C4F8 100%);box-shadow:inset -1px -1px 0 #A8BDF0"></div>
<svg style="left:1007px;top:667px" width="15" height="15"><path d="M4 6 L7.5 9.5 L11 6" fill="none" stroke="#4D6185" stroke-width="2"/></svg>
<div class="a" style="left:1008px;top:314px;width:13px;height:158px;border:1px solid #FFFFFF;border-radius:2px;background:linear-gradient(to right,#BFD0FA 0%,#C9D8FC 50%,#B8CBF8 100%);box-shadow:inset -1px -1px 0 #A8BDF0"></div>
<svg style="left:1010px;top:388px" width="9" height="9"><path d="M1 1.5 H8 M1 3.5 H8 M1 5.5 H8 M1 7.5 H8" stroke="#E8EEFF" stroke-width="1"/><path d="M2 2.5 H8 M2 4.5 H8 M2 6.5 H8" stroke="#8CA4E0" stroke-width="1"/></svg>
<div class="a" style="left:264px;top:683px;width:742px;height:17px;background:linear-gradient(to bottom,#F3F1EA 0%,#FDFDFA 50%,#F6F5EF 100%)"></div>
<div class="a" style="left:1006px;top:683px;width:17px;height:17px;background:#ECE9D8"></div>
<div class="a" style="left:265px;top:684px;width:16px;height:15px;border:1px solid #FFFFFF;border-radius:2px;background:linear-gradient(135deg,#C8D8FC 0%,#BCCEFA 50%,#B0C4F8 100%);box-shadow:inset -1px -1px 0 #A8BDF0"></div>
<svg style="left:265px;top:684px" width="16" height="15"><path d="M9.5 4 L6 7.5 L9.5 11" fill="none" stroke="#4D6185" stroke-width="2"/></svg>
<div class="a" style="left:989px;top:684px;width:15px;height:15px;border:1px solid #FFFFFF;border-radius:2px;background:linear-gradient(135deg,#C8D8FC 0%,#BCCEFA 50%,#B0C4F8 100%);box-shadow:inset -1px -1px 0 #A8BDF0"></div>
<svg style="left:989px;top:684px" width="15" height="15"><path d="M6 4 L9.5 7.5 L6 11" fill="none" stroke="#4D6185" stroke-width="2"/></svg>
<div class="a" style="left:511px;top:684px;width:205px;height:15px;border:1px solid #FFFFFF;border-radius:2px;background:linear-gradient(to bottom,#BFD0FA 0%,#C9D8FC 50%,#B8CBF8 100%);box-shadow:inset -1px -1px 0 #A8BDF0"></div>
<svg style="left:609px;top:688px" width="9" height="9"><path d="M1.5 1 V8 M3.5 1 V8 M5.5 1 V8 M7.5 1 V8" stroke="#E8EEFF" stroke-width="1"/><path d="M2.5 2 V8 M4.5 2 V8 M6.5 2 V8" stroke="#8CA4E0" stroke-width="1"/></svg>
<div class="a" style="left:4px;top:700px;width:1019px;height:15px;background:#ECE9D8"></div>
<svg style="left:0;top:699px" width="1027" height="17" shape-rendering="crispEdges"><rect x="4" y="1" width="1019" height="1" fill="#000"/><path d="M5.5 1.5 L18.5 14.5 H78.5 L91.5 1.5 Z" fill="#F0EEE1" stroke="none"/><path d="M5.5 1.5 L18.5 14.5 H78.5 L91.5 1.5" fill="none" stroke="#000" stroke-width="1"/><path d="M80.5 1.5 L93.5 14.5 H139.5 L152.5 1.5 Z" fill="#F0EEE1" stroke="none"/><path d="M80.5 1.5 L93.5 14.5 H139.5 L152.5 1.5" fill="none" stroke="#000" stroke-width="1"/><path d="M141.5 1.5 L154.5 14.5 H209.5 L222.5 1.5 Z" fill="#F0EEE1" stroke="none"/><path d="M141.5 1.5 L154.5 14.5 H209.5 L222.5 1.5" fill="none" stroke="#000" stroke-width="1"/><path d="M211.5 1.5 L224.5 14.5 H281.5 L294.5 1.5 Z" fill="#F0EEE1" stroke="none"/><path d="M211.5 1.5 L224.5 14.5 H281.5 L294.5 1.5" fill="none" stroke="#000" stroke-width="1"/><path d="M284.5 1.5 L297.5 14.5 H363.5 L376.5 1.5 Z" fill="#F0EEE1" stroke="none"/><path d="M284.5 1.5 L297.5 14.5 H363.5 L376.5 1.5" fill="none" stroke="#000" stroke-width="1"/><path d="M365.5 1.5 L378.5 14.5 H444.5 L457.5 1.5 Z" fill="#F0EEE1" stroke="none"/><path d="M365.5 1.5 L378.5 14.5 H444.5 L457.5 1.5" fill="none" stroke="#000" stroke-width="1"/><path d="M446.5 1.5 L459.5 14.5 H525.5 L538.5 1.5 Z" fill="#F0EEE1" stroke="none"/><path d="M446.5 1.5 L459.5 14.5 H525.5 L538.5 1.5" fill="none" stroke="#000" stroke-width="1"/><path d="M567.5 1.5 L580.5 14.5 H635.5 L648.5 1.5 Z" fill="#F0EEE1" stroke="none"/><path d="M567.5 1.5 L580.5 14.5 H635.5 L648.5 1.5" fill="none" stroke="#000" stroke-width="1"/><path d="M637.5 1.5 L650.5 14.5 H708.5 L721.5 1.5 Z" fill="#F0EEE1" stroke="none"/><path d="M637.5 1.5 L650.5 14.5 H708.5 L721.5 1.5" fill="none" stroke="#000" stroke-width="1"/><path d="M710.5 1.5 L723.5 14.5 H783.5 L796.5 1.5 Z" fill="#F0EEE1" stroke="none"/><path d="M710.5 1.5 L723.5 14.5 H783.5 L796.5 1.5" fill="none" stroke="#000" stroke-width="1"/><path d="M526.5 1.5 L539.5 14.5 H565.5 L578.5 1.5 Z" fill="#FFFFFF" stroke="none"/><path d="M526.5 1.5 L539.5 14.5 H565.5 L578.5 1.5" fill="none" stroke="#000" stroke-width="1"/><rect x="528" y="1" width="50" height="1" fill="#FFFFFF"/></svg>
<div class="t" style="left:21px;top:701.69px;font-size:11px;line-height:11px;font-weight:normal;color:#000;">Aislamiento</div>
<div class="t" style="left:93px;top:701.69px;font-size:11px;line-height:11px;font-weight:normal;color:#000;">Incendio</div>
<div class="t" style="left:155px;top:701.69px;font-size:11px;line-height:11px;font-weight:normal;color:#000;">Salubridad</div>
<div class="t" style="left:225px;top:701.69px;font-size:11px;line-height:11px;font-weight:normal;color:#000;">Fontanería</div>
<div class="t" style="left:297px;top:701.69px;font-size:11px;line-height:11px;font-weight:normal;color:#000;">Saneamiento</div>
<div class="t" style="left:379px;top:701.69px;font-size:11px;line-height:11px;font-weight:normal;color:#000;">Climatización</div>
<div class="t" style="left:460px;top:701.69px;font-size:11px;line-height:11px;font-weight:normal;color:#000;">Solar térmica</div>
<div class="t" style="left:541px;top:701.69px;font-size:11px;line-height:11px;font-weight:normal;color:#000;">Gas</div>
<div class="t" style="left:581px;top:701.69px;font-size:11px;line-height:11px;font-weight:normal;color:#000;">Pararrayos</div>
<div class="t" style="left:651px;top:701.69px;font-size:11px;line-height:11px;font-weight:normal;color:#000;">Iluminación</div>
<div class="t" style="left:724px;top:701.69px;font-size:11px;line-height:11px;font-weight:normal;color:#000;">Electricidad</div>
<div class="a" style="left:4px;top:714px;width:1019px;height:1px;background:#A9A592"></div>
<div class="a" style="left:4px;top:715px;width:1019px;height:1px;background:#FFFFFF"></div>
<div class="a" style="left:4px;top:716px;width:1019px;height:20px;background:#ECE9D8"></div>
<div class="a" style="left:5px;top:717px;width:868px;height:19px;border-top:1px solid #ACA899;border-left:1px solid #ACA899;border-right:1px solid #FFFFFF;border-bottom:1px solid #FFFFFF"></div>
<div class="a" style="left:875px;top:717px;width:147px;height:19px;border-top:1px solid #ACA899;border-left:1px solid #ACA899;border-bottom:1px solid #FFFFFF"></div>
<svg style="left:7px;top:718px" width="18" height="17"><path d="M1.5 7.5 L9 0.8 L15.5 4.5 L15.5 7 L8.5 14 L1.5 10 Z" fill="#000"/>
<path d="M2 7.3 L9 1.5 L14.5 4.8 L7.8 11 Z" fill="#8A10A8"/>
<path d="M2.2 8 L7.8 11.3 L14.8 5.5 V7 L8 13 L2.2 9.8 Z" fill="#F4F4F4"/>
<path d="M3 6.6 L8.6 2" stroke="#C8A0D8" stroke-width="0.8" stroke-dasharray="1 1"/>
<path d="M7.5 4.5 Q9.5 3 11 4.5 Q11 6 9.2 6.5 L8.8 8" fill="none" stroke="#FFF000" stroke-width="1.4"/></svg>
<div class="t" style="left:26px;top:720.69px;font-size:11px;line-height:11px;font-weight:normal;color:#000;letter-spacing:-0.2px">Resultados - Mostrar los resultados calculados</div>
<svg style="left:878px;top:719px" width="16" height="16" shape-rendering="crispEdges"><rect x="0" y="0" width="16" height="14" fill="#70C8E8"/><rect x="3.5" y="1.5" width="9" height="12" fill="#FFF4E8" stroke="#E0A070" stroke-width="1"/><line x1="3" y1="7.5" x2="13" y2="7.5" stroke="#E0A070"/><rect x="4" y="12" width="8" height="1.5" fill="#FF10E0"/><rect x="0" y="14" width="16" height="2" fill="#8A4A10"/></svg>
<div class="t" style="left:896px;top:720.69px;font-size:11px;line-height:11px;font-weight:normal;color:#000;">Planta baja</div>
<svg style="left:7px;top:55px" width="16" height="16" viewBox="0 0 16 16"><path d="M0.5 13.5 V4.5 L1.5 3.5 H5 L6 4.5 H11 V7" fill="#F6DC8C" stroke="#B8861C"/><path d="M0.5 13.5 L3.5 7.5 H15.5 L12.5 13.5 Z" fill="#FCECA8" stroke="#B8861C"/><path d="M8 3 Q11 0 14 3" fill="none" stroke="#000" stroke-width="1"/><path d="M12.5 2 L14.5 3.5 L14 1" fill="none" stroke="#000"/></svg>
<svg style="left:31px;top:55px" width="16" height="16" viewBox="0 0 16 16"><rect x="0.5" y="0.5" width="14" height="14" fill="#808000" stroke="#000"/><rect x="3" y="1" width="9" height="6" fill="#fff"/><rect x="3" y="9" width="9" height="5.5" fill="#000"/><rect x="8" y="10" width="2" height="3.5" fill="#fff"/><rect x="12" y="1" width="1" height="1" fill="#fff"/></svg>
<div class="a" style="left:53px;top:53px;width:1px;height:18px;background:#C5C1AE"></div>
<div class="a" style="left:54px;top:53px;width:1px;height:18px;background:#FFFFFF"></div>
<svg style="left:61px;top:55px" width="16" height="16" viewBox="0 0 16 16"><path d="M1 1 L6 7" stroke="#000" stroke-width="2"/><path d="M1.5 1.5 L5.5 6.5" stroke="#F0E000" stroke-width="1"/><rect x="5" y="0" width="3" height="7" fill="#000"/><rect x="6" y="1" width="1" height="5" fill="#E00000"/><path d="M14 1 L9 7" stroke="#000" stroke-width="2"/><path d="M13.5 1.5 L9.5 6.5" stroke="#10C000" stroke-width="1"/><path d="M3 7 H10 V15 H3 Z" fill="#000"/><path d="M4 8 L8 11 L4 14 Z" fill="#00D0E0"/><rect x="8" y="8" width="7" height="5" fill="#000"/><rect x="9" y="9" width="5" height="3" fill="#FFF000"/><rect x="14" y="9" width="1" height="3" fill="#E00000"/></svg>
<svg style="left:83px;top:55px" width="17" height="17" viewBox="0 0 17 17"><path d="M1 5 L3 3 L6 6 V1 L8 0 L10 1 V6 L13 3 L15.5 5 L11 10 V15.5 H6 V10 Z" fill="#ACA899" stroke="#FFFFFF" stroke-width="0.9" stroke-linejoin="round"/><circle cx="7" cy="2.5" r="0.9" fill="#fff"/><circle cx="12.5" cy="5" r="0.9" fill="#fff"/></svg>
<svg style="left:107px;top:55px" width="16" height="16" viewBox="0 0 16 16"><rect x="0.5" y="0.5" width="14" height="8" fill="#fff" stroke="#000"/><text x="7.5" y="7" font-family="Liberation Mono" font-size="6.5" font-weight="bold" text-anchor="middle" fill="#000">TXT</text><path d="M1 13 H14 M7.5 11 V16" stroke="#F00010" stroke-width="1.2"/><path d="M1 13 L3 11.5 M1 13 L3 14.5 M14 13 L12 11.5 M14 13 L12 14.5 M7.5 16 L6 14 M7.5 16 L9 14" stroke="#F00010" stroke-width="1"/></svg>
<svg style="left:130px;top:55px" width="16" height="16" viewBox="0 0 16 16"><path d="M0.5 1.5 H12 L15.5 5 V14.5 H0.5 Z" fill="#fff" stroke="#000"/><path d="M12 1.5 V5 H15.5" fill="#D0D0D0" stroke="#000"/><text x="7.5" y="7.5" font-family="Liberation Sans" font-size="5" font-weight="bold" text-anchor="middle" fill="#000">DXF</text><text x="7.5" y="12.5" font-family="Liberation Sans" font-size="5" font-weight="bold" text-anchor="middle" fill="#000">DWG</text><rect x="1" y="14" width="14" height="1.5" fill="#606060"/></svg>
<div class="a" style="left:150px;top:52px;width:23px;height:21px;border:1px solid #8DA2C8;border-radius:3px;background:linear-gradient(to bottom,#FFFFFF 0%,#F4F3EE 100%)"></div>
<svg style="left:154px;top:55px" width="16" height="16" viewBox="0 0 16 16"><text x="6" y="6" font-family="Liberation Sans" font-size="6" font-weight="bold" text-anchor="middle" fill="#A00000">DXF</text><text x="6" y="15" font-family="Liberation Sans" font-size="6" font-weight="bold" text-anchor="middle" fill="#A00000">DWG</text><path d="M1 9.5 H10 M8 8 L10 9.5 L8 11" stroke="#E00000" stroke-width="1" fill="none"/><path d="M1 10 L5 7" stroke="#000" stroke-width="0.8"/><rect x="12" y="1" width="4" height="15" fill="#404040"/><path d="M12 3.5 H16 M12 6.5 H16 M12 9.5 H16 M12 12.5 H16" stroke="#B0B0B0"/></svg>
<svg style="left:177px;top:55px" width="16" height="16" viewBox="0 0 16 16"><path d="M1 15 V7 A6.5 6.5 0 0 1 14 7 V15 H10 V7 A2.5 2.5 0 0 0 5 7 V15 Z" fill="#E80010" stroke="#000" stroke-width="1"/><rect x="1.5" y="12.5" width="3" height="2.5" fill="#fff"/><rect x="10.5" y="12.5" width="3" height="2.5" fill="#fff"/></svg>
<div class="a" style="left:200px;top:53px;width:1px;height:18px;background:#C5C1AE"></div>
<div class="a" style="left:201px;top:53px;width:1px;height:18px;background:#FFFFFF"></div>
<svg style="left:208px;top:58px" width="14" height="10" viewBox="0 0 14 10"><path d="M3 4 Q7 0.5 11 3 Q13 6 10 8" fill="none" stroke="#ACA899" stroke-width="2"/><path d="M1 1 V7 H7 Z" fill="#ACA899"/></svg>
<svg style="left:231px;top:58px" width="14" height="10" viewBox="0 0 14 10"><path d="M11 4 Q7 0.5 3 3 Q1 6 4 8" fill="none" stroke="#ACA899" stroke-width="2"/><path d="M13 1 V7 H7 Z" fill="#ACA899"/></svg>
<div class="a" style="left:253px;top:53px;width:1px;height:18px;background:#C5C1AE"></div>
<div class="a" style="left:254px;top:53px;width:1px;height:18px;background:#FFFFFF"></div>
<svg style="left:263px;top:58px" width="12" height="8" viewBox="0 0 12 8"><path d="M0.5 7 L6 1 L11.5 7 Z" fill="#000"/></svg>
<svg style="left:285px;top:54px" width="15" height="17" viewBox="0 0 15 17"><path d="M0.5 1 H14.5 M0.5 16 H14.5" stroke="#000" stroke-width="1.5"/><path d="M1.5 8 L7.5 2 L13.5 8 Z M1.5 9 L7.5 15 L13.5 9 Z" fill="#000"/></svg>
<svg style="left:308px;top:60px" width="12" height="8" viewBox="0 0 12 8"><path d="M0.5 1 L6 7 L11.5 1 Z" fill="#ACA899"/></svg>
<div class="a" style="left:330px;top:53px;width:1px;height:18px;background:#C5C1AE"></div>
<div class="a" style="left:331px;top:53px;width:1px;height:18px;background:#FFFFFF"></div>
<svg style="left:337px;top:55px" width="16" height="16" viewBox="0 0 16 16"><circle cx="7" cy="6" r="5.5" fill="#DFF4FF" stroke="#000" stroke-width="1"/><path d="M11 10 L15 14.5" stroke="#000" stroke-width="2.5"/><path d="M4 4 Q9 0 11 3 Q10 6 7 6 L10 11 M6 3 L3 14" fill="none" stroke="#1040F0" stroke-width="2"/><path d="M1 11 L3 15 L6 12" fill="none" stroke="#1040F0" stroke-width="1.6"/></svg>
<svg style="left:360px;top:55px" width="16" height="16" viewBox="0 0 16 16"><circle cx="7" cy="7" r="6.2" fill="#fff" stroke="#000" stroke-width="1.2"/><path d="M11.5 11.5 L15.5 15.5" stroke="#000" stroke-width="2.5"/><path d="M7 2 V12 M2 7 H12" stroke="#1040F0" stroke-width="1.2"/><path d="M7 1.5 L5 4 H9 Z M7 12.5 L5 10 H9 Z M1.5 7 L4 5 V9 Z M12.5 7 L10 5 V9 Z" fill="#1040F0"/></svg>
<svg style="left:384px;top:55px" width="16" height="16" viewBox="0 0 16 16"><circle cx="7" cy="7" r="6.2" fill="#fff" stroke="#000" stroke-width="1.2"/><path d="M4 3 A5 5 0 0 1 11 4" stroke="#60D0F0" stroke-width="1.5" fill="none"/><path d="M11.5 11.5 L15.5 15.5" stroke="#000" stroke-width="2.5"/><text x="7.5" y="10" font-family="Liberation Sans" font-size="7.5" text-anchor="middle" fill="#1040A0">×2</text></svg>
<svg style="left:407px;top:55px" width="16" height="16" viewBox="0 0 16 16"><path d="M4 11 L13 2 L15 4 L6 13 L3 14 Z" fill="#FFF060" stroke="#000" stroke-width="0.9"/><path d="M13 2 L15 4" stroke="#E00000" stroke-width="1.8"/><path d="M0 15 Q4 12 9 13 L16 15" fill="none" stroke="#000" stroke-width="1"/><path d="M6 13 L13 8" stroke="#A0A0A0" stroke-width="1.5"/></svg>
<svg style="left:429px;top:55px" width="16" height="16" viewBox="0 0 16 16"><rect x="0.5" y="6.5" width="8" height="8" fill="none" stroke="#2040F0" stroke-dasharray="1 1"/><circle cx="8" cy="6" r="5" fill="#E8F8FF" stroke="#000" stroke-width="1.2"/><path d="M5 4 A3 3 0 0 1 10 3.5" stroke="#60D0F0" stroke-width="1.3" fill="none"/><path d="M11.5 9.5 L15.5 14" stroke="#000" stroke-width="2.5"/></svg>
<svg style="left:454px;top:55px" width="16" height="16" viewBox="0 0 16 16"><g fill="#fff" stroke="#000" stroke-width="1"><rect x="3.5" y="2.5" width="2.5" height="9" rx="1.2"/><rect x="6" y="0.5" width="2.5" height="10" rx="1.2"/><rect x="8.5" y="1.5" width="2.5" height="9" rx="1.2"/><rect x="11" y="3.5" width="2.5" height="8" rx="1.2"/><path d="M1 10 Q0.5 8.5 2 8.5 L3.5 10 V8 H13.5 V11.5 L11.5 15.5 H5 Z"/></g><path d="M4 9 H13" stroke="#fff" stroke-width="2"/></svg>
<svg style="left:476px;top:55px" width="16" height="16" viewBox="0 0 16 16"><rect x="0.5" y="0.5" width="14" height="10" fill="#fff" stroke="#000"/><rect x="1" y="1" width="13" height="2" fill="#40C0F0"/><path d="M8 6 H15.5 V15.5 H8 Z" fill="#fff" stroke="#404040"/><path d="M9.5 8.5 H14 M9.5 10.5 H14 M9.5 12.5 H14" stroke="#606060" stroke-width="0.8"/><path d="M4 6 Q1 10 6 13" fill="none" stroke="#1040F0" stroke-width="2"/><path d="M4 11 L7 13.5 L4 15.5 Z" fill="#1040F0"/></svg>
<div class="a" style="left:498px;top:53px;width:1px;height:18px;background:#C5C1AE"></div>
<div class="a" style="left:499px;top:53px;width:1px;height:18px;background:#FFFFFF"></div>
<svg style="left:507px;top:55px" width="16" height="16" viewBox="0 0 16 16"><rect x="0.5" y="0.5" width="15" height="15" fill="#fff" stroke="#000"/><rect x="1" y="1" width="14" height="2.5" fill="#0A1E80"/><path d="M2 13 V8 L4 5 H7 V8 H9 V5 H12 L14 8 V13 H9.5 V10 H6.5 V13 Z" fill="#000"/><rect x="3" y="11" width="1.5" height="1.5" fill="#fff"/><rect x="11" y="11" width="1.5" height="1.5" fill="#fff"/></svg>
<svg style="left:530px;top:55px" width="16" height="16" viewBox="0 0 16 16"><path d="M2.5 0.5 V14.5 H15.5" fill="none" stroke="#000" stroke-width="1.1"/><path d="M1 2 L2.5 0 L4 2 M14 13 L16 14.5 L14 16" fill="none" stroke="#000" stroke-width="1"/><text x="6.5" y="6" font-family="Liberation Sans" font-size="6" font-weight="bold" fill="#000">Y</text><text x="10" y="12" font-family="Liberation Sans" font-size="6" font-weight="bold" fill="#000">X</text></svg>
<svg style="left:553px;top:55px" width="16" height="16" viewBox="0 0 16 16"><path d="M0.5 13.5 H15 M5.5 13.5 V3" fill="none" stroke="#000" stroke-width="1.2"/><path d="M5.5 9 Q9 9 10 13" fill="none" stroke="#000" stroke-width="1"/><rect x="7" y="11" width="1" height="1" fill="#000"/></svg>
<svg style="left:576px;top:55px" width="16" height="16" viewBox="0 0 16 16"><path d="M3.5 0 V16 M0 12.5 H16" stroke="#000" stroke-width="1" stroke-dasharray="1 1"/><path d="M3.5 12.5 L14 2" stroke="#000" stroke-width="1.2"/><path d="M14.5 1.5 L10 2.5 L13.5 6 Z" fill="#000"/><circle cx="3.5" cy="12.5" r="1.2" fill="#000"/></svg>
<div class="a" style="left:599px;top:53px;width:1px;height:18px;background:#C5C1AE"></div>
<div class="a" style="left:600px;top:53px;width:1px;height:18px;background:#FFFFFF"></div>
<svg style="left:874px;top:55px" width="16" height="16" viewBox="0 0 16 16"><defs><radialGradient id="glb" cx="0.35" cy="0.3" r="0.8"><stop offset="0" stop-color="#A0D8FF"/><stop offset="0.5" stop-color="#1E78E8"/><stop offset="1" stop-color="#0A3CA0"/></radialGradient></defs><circle cx="8" cy="8" r="7.5" fill="url(#glb)"/><path d="M3 5 Q5 3 7 5 Q6 8 8 9 L7 13 Q4 11 4 9 Z M10 3 Q13 4 14 8 L12 9 Q10 7 11 5 Z" fill="#E8F8FF" opacity="0.85"/></svg>
<svg style="left:892px;top:61px" width="7" height="4" viewBox="0 0 7 4"><path d="M0 0 H7 L3.5 4 Z" fill="#000"/></svg>
<svg style="left:904px;top:55px" width="16" height="16" viewBox="0 0 16 16"><path d="M4 1 H12 L13 5 H3 Z" fill="#fff" stroke="#404040" stroke-width="0.8"/><path d="M1 6 L3 4.5 H13 L15 6 V12 H1 Z" fill="#C0C0C0" stroke="#404040" stroke-width="0.9"/><path d="M1 9 H15" stroke="#808080"/><rect x="3" y="12" width="10" height="3" fill="#A0A0A0" stroke="#404040" stroke-width="0.8"/><rect x="9" y="7" width="2" height="1" fill="#00C000"/><rect x="6" y="7" width="2" height="1" fill="#E00000"/></svg>
<svg style="left:927px;top:55px" width="16" height="16" viewBox="0 0 16 16"><path d="M2 3 L8 1 L15 5 L14 12 L7 14 L1 10 Z" fill="#fff" stroke="#303030" stroke-width="1"/><path d="M8 1 L7 7 L1 10 M7 7 L14 12" stroke="#303030" stroke-width="0.9" fill="none"/><path d="M11 9 L11 15 M13 9 V15" stroke="#303030"/><rect x="9" y="5" width="5" height="2" fill="#909090"/></svg>
<svg style="left:949px;top:55px" width="16" height="16" viewBox="0 0 16 16"><rect x="4.5" y="0.5" width="11" height="14" fill="#808000" stroke="#000"/><rect x="7" y="1" width="6" height="5" fill="#fff"/><rect x="7" y="9" width="6" height="5" fill="#000"/><path d="M0 6 H6 V3 L12 8.5 L6 14 V11 H0 Z" fill="#F00010" stroke="#A00000" stroke-width="0.6"/></svg>
<svg style="left:969px;top:61px" width="7" height="4" viewBox="0 0 7 4"><path d="M0 0 H7 L3.5 4 Z" fill="#000"/></svg>
<div class="a" style="left:978px;top:52px;width:22px;height:21px;border:1px solid #8DA2C8;border-radius:3px;background:linear-gradient(to bottom,#FFFFFF 0%,#F4F3EE 100%)"></div>
<svg style="left:981px;top:55px" width="16" height="16" viewBox="0 0 16 16"><rect x="0.5" y="0.5" width="15" height="8" fill="#C8C8C8" stroke="#303030"/><rect x="1" y="1" width="14" height="2" fill="#1030C0"/><path d="M3 5 L4 7 L6 4 M8 5 L9 7 L11 4 M12 5 L13 7 L15 4" stroke="#E00000" fill="none" stroke-width="1.1"/><path d="M4 9 V15 M2 13 L4 15 L6 13 M12 15 V9 M10 11 L12 9 L14 11" stroke="#000" stroke-width="1.2" fill="none"/></svg>
<svg style="left:1004px;top:55px" width="16" height="16" viewBox="0 0 16 16"><path d="M0.5 2.5 H5 L6 3.5 H11 V10.5 H0.5 Z" fill="#fff" stroke="#000"/><path d="M14.5 0 V16" stroke="#000" stroke-width="1.4"/><path d="M4 13 H12 M4 13 L6.5 11 M4 13 L6.5 15" stroke="#1040F0" stroke-width="1.3" fill="none"/></svg>
<svg style="left:7px;top:79px" width="16" height="16" viewBox="0 0 16 16"><rect x="0.5" y="0.5" width="15" height="15" fill="#fff" stroke="#000"/><rect x="1" y="1" width="14" height="2.5" fill="#1838C8"/><rect x="2" y="1.5" width="1" height="1" fill="#fff"/><path d="M2 12 L6 7 H12 L14.5 6.5 V10 L11 11 H8 L5 13 Z" fill="#F8E830" stroke="#000" stroke-width="0.7"/><path d="M4 10 L5 11 M6 9 L7 10 M8 8 L9 9 M5 12 L6 11 M7 11 L8 10" stroke="#000" stroke-width="0.8"/><rect x="14" y="6" width="1.5" height="5" fill="#6A2A0A"/><rect x="2" y="11" width="2" height="2" fill="#E00000"/><path d="M2 14.5 H5 M7 14.5 H11 M2 5.5 H4 M12 13 H14" stroke="#404040" stroke-width="0.8"/></svg>
<svg style="left:30px;top:79px" width="16" height="16" viewBox="0 0 16 16"><rect x="0" y="1" width="15" height="15" fill="#1010C8"/><path d="M1.5 8.5 L7.5 2.5 H12.5 V8 L7 14.5 Z" fill="#F8F000" stroke="#000" stroke-width="0.9"/><path d="M10.5 7 A3 3.3 0 1 0 10.5 12" fill="none" stroke="#E00000" stroke-width="1.4"/><path d="M5.5 8.8 H9 M5.5 10.5 H9" stroke="#E00000" stroke-width="1"/><path d="M12 3 L15.5 0" stroke="#000" stroke-width="1.2"/><circle cx="11" cy="4" r="0.8" fill="#C08000"/></svg>
<svg style="left:52px;top:79px" width="19" height="16" viewBox="0 0 19 16"><circle cx="6" cy="10" r="4.2" fill="none" stroke="#1040F0" stroke-width="1.3"/><path d="M1 15 L12 4" stroke="#1040F0" stroke-width="1.3"/><path d="M12.5 3 L9 4 L11.5 6.5 Z" fill="#1040F0"/><text x="13" y="6" font-family="Liberation Sans" font-size="6.5" font-weight="bold" fill="#000">N</text></svg>
<svg style="left:75px;top:79px" width="16" height="16" viewBox="0 0 16 16"><rect x="1" y="2" width="14" height="12" fill="#fff" stroke="#C020C0" stroke-width="1.3"/><path d="M3 12 H13 V5 H10 V9 H3 Z" fill="#E88A6A"/></svg>
<svg style="left:100px;top:79px" width="16" height="16" viewBox="0 0 16 16"><rect x="1" y="0" width="3" height="16" fill="#000"/><rect x="5" y="0" width="3" height="16" fill="#000"/><rect x="8" y="5" width="8" height="3" fill="#000"/><rect x="8" y="9" width="8" height="2" fill="#000"/><rect x="2" y="0" width="5" height="16" fill="#10D010"/><rect x="3.5" y="0" width="2" height="16" fill="#FFF000"/><rect x="7" y="6.5" width="9" height="3" fill="#10D010"/><rect x="7" y="7.3" width="9" height="1.5" fill="#FFF000"/></svg>
<div class="a" style="left:122px;top:77px;width:1px;height:18px;background:#C5C1AE"></div>
<div class="a" style="left:123px;top:77px;width:1px;height:18px;background:#FFFFFF"></div>
<svg style="left:129px;top:79px" width="16" height="16" viewBox="0 0 16 16"><path d="M1 7 H12 L16 3 V11 L12 15 H1 Z" fill="#E8C880" stroke="#303030" stroke-width="0.8"/><path d="M1 9.5 H12 M1 12 H12 M4 7 V9.5 M8 7 V9.5 M6 9.5 V12 M10 9.5 V12 M3 12 V15 M7 12 V15 M11 12 V15" stroke="#303030" stroke-width="0.8"/></svg>
<svg style="left:152px;top:79px" width="16" height="16" viewBox="0 0 16 16"><path d="M1 6 L4 2 H15 L14 6 Z" fill="#fff" stroke="#000" stroke-width="1"/><path d="M1 6 H14 V14 M1 6 V13 M14 6 L15 2 V11 L14 14" fill="none" stroke="#000" stroke-width="1.4"/><path d="M3 13 V8 H12 V14" fill="none" stroke="#808080" stroke-width="1"/></svg>
<svg style="left:177px;top:79px" width="16" height="16" viewBox="0 0 16 16"><rect x="0.5" y="2.5" width="13" height="12" fill="#00C8F0" stroke="#000" stroke-width="1.2"/><path d="M0.5 4.5 H11.5 V14.5" fill="none" stroke="#000" stroke-width="1"/><path d="M1 3 H13 V14" fill="none" stroke="#fff" stroke-width="0.6"/></svg>
<svg style="left:199px;top:79px" width="16" height="16" viewBox="0 0 16 16"><path d="M8 1.5 H15 M8 1.5 V14" stroke="#000" stroke-width="1.5"/><path d="M8 3 V13" stroke="#F02020" stroke-width="1.5" stroke-dasharray="1 1"/><path d="M1 14.5 H8" stroke="#000" stroke-width="1.5"/></svg>
<svg style="left:222px;top:79px" width="16" height="16" viewBox="0 0 16 16"><rect x="0.5" y="0.5" width="9" height="15" fill="#fff" stroke="#505050"/><rect x="9.5" y="6.5" width="6" height="9" fill="#fff" stroke="#505050"/><path d="M2 2.5 H4 M6 2.5 H8 M2 5.5 H4 M6 5.5 H8 M2 8.5 H4 M6 8.5 H8 M2 11.5 H4 M6 11.5 H8 M11 9 H12 M13.5 9 H14 M11 12 H12 M13.5 12 H14" stroke="#000" stroke-width="2"/><rect x="4" y="13" width="2" height="3" fill="#000"/></svg>
<div class="a" style="left:245px;top:77px;width:1px;height:18px;background:#C5C1AE"></div>
<div class="a" style="left:246px;top:77px;width:1px;height:18px;background:#FFFFFF"></div>
<svg style="left:252px;top:79px" width="16" height="16" viewBox="0 0 16 16"><path d="M1 8 L4 5 H15 L12 8 Z" fill="#20D0E0" stroke="#000" stroke-width="0.9"/><path d="M1 8 H12 V14 H1 Z" fill="#fff" stroke="#000" stroke-width="1.1"/><path d="M12 8 L15 5 V11 L12 14" fill="#fff" stroke="#000" stroke-width="1.1"/><path d="M2 10 Q5 8 8 9" stroke="#000" fill="none" stroke-width="0.8"/><path d="M8 0 V5 M5.5 2.5 H10.5" stroke="#1040F0" stroke-width="1.5"/></svg>
<svg style="left:275px;top:79px" width="16" height="16" viewBox="0 0 16 16"><path d="M1 8 L4 5 H15 L12 8 Z" fill="#20D0E0" stroke="#000" stroke-width="0.9"/><path d="M1 8 H12 V14 H1 Z" fill="#fff" stroke="#000" stroke-width="1.1"/><path d="M12 8 L15 5 V11 L12 14" fill="#fff" stroke="#000" stroke-width="1.1"/><path d="M2 10 Q5 8 8 9" stroke="#000" fill="none" stroke-width="0.8"/><circle cx="12" cy="2.5" r="2.6" fill="#F0E000"/><path d="M5 0 V5 M2.5 2.5 H7.5 M3 0.5 L7 4.5 M7 0.5 L3 4.5" stroke="#1040F0" stroke-width="0.8"/></svg>
<div class="a" style="left:300px;top:77px;width:1px;height:18px;background:#C5C1AE"></div>
<div class="a" style="left:301px;top:77px;width:1px;height:18px;background:#FFFFFF"></div>
<svg style="left:307px;top:79px" width="16" height="16" viewBox="0 0 16 16"><path d="M0 12.5 H16" stroke="#1040F0" stroke-width="1.3"/><rect x="6" y="10.5" width="4" height="4" fill="#fff" stroke="#1040F0" stroke-width="1"/><path d="M8 2 V7 M5.5 4.5 H10.5" stroke="#000" stroke-width="1.5"/></svg>
<svg style="left:330px;top:79px" width="16" height="16" viewBox="0 0 16 16"><path d="M0 9.5 H16" stroke="#1040F0" stroke-width="2.5"/></svg>
<svg style="left:353px;top:79px" width="16" height="16" viewBox="0 0 16 16"><path d="M8 1 V16" stroke="#1040F0" stroke-width="2.5"/></svg>
<svg style="left:376px;top:79px" width="16" height="16" viewBox="0 0 16 16"><path d="M0 14.5 H16" stroke="#1040F0" stroke-width="1.3"/><circle cx="5.5" cy="14" r="1.8" fill="#fff" stroke="#1040F0" stroke-width="1"/><path d="M5 13 L13 4 L15 6 L7 14 Z" fill="#FFF060" stroke="#000" stroke-width="0.8"/><path d="M13 4 L15 6" stroke="#E00000" stroke-width="1.8"/><path d="M7 13 L13 8" stroke="#A0A0A0" stroke-width="1.2"/></svg>
<svg style="left:399px;top:79px" width="16" height="16" viewBox="0 0 16 16"><path d="M8 0 V11 M3 5.5 H13" stroke="#000" stroke-width="1.2"/><path d="M8 0 L6 2.5 H10 Z M8 11 L6 8.5 H10 Z M1 5.5 L3.5 3.5 V7.5 Z M15 5.5 L12.5 3.5 V7.5 Z" fill="#000"/><path d="M0 14.5 H16" stroke="#1040F0" stroke-width="1.3"/><rect x="6" y="12.5" width="4" height="4" fill="#fff" stroke="#1040F0" stroke-width="1"/></svg>
<svg style="left:422px;top:79px" width="16" height="16" viewBox="0 0 16 16"><path d="M8 0 V11 M3 5.5 H13" stroke="#000" stroke-width="1.2"/><path d="M8 0 L6 2.5 H10 Z M8 11 L6 8.5 H10 Z M1 5.5 L3.5 3.5 V7.5 Z M15 5.5 L12.5 3.5 V7.5 Z" fill="#000"/><path d="M0 14.5 H16" stroke="#1040F0" stroke-width="2.5"/></svg>
<div class="a" style="left:446px;top:77px;width:1px;height:18px;background:#C5C1AE"></div>
<div class="a" style="left:447px;top:77px;width:1px;height:18px;background:#FFFFFF"></div>
<svg style="left:454px;top:79px" width="16" height="16" viewBox="0 0 16 16"><path d="M1 15 L3 11 L12 2 L14 4 L5 13 Z" fill="#FFF060" stroke="#000" stroke-width="0.9"/><path d="M12 2 L14 4" stroke="#E00000" stroke-width="2"/><path d="M4 14 L12 9" stroke="#B0B0B0" stroke-width="1.5"/></svg>
<svg style="left:476px;top:79px" width="16" height="16" viewBox="0 0 16 16"><path d="M7.5 1 V15 M1 8 H14" stroke="#000" stroke-width="1.2"/><path d="M7.5 0 L5 3 H10 Z M7.5 16 L5 13 H10 Z M0 8 L3 5.5 V10.5 Z M15 8 L12 5.5 V10.5 Z" fill="#000"/></svg>
<svg style="left:500px;top:79px" width="16" height="16" viewBox="0 0 16 16"><path d="M10.5 6 A5 5 0 1 0 11 11" fill="none" stroke="#000" stroke-width="1.8"/><path d="M8 9 L13 9 L11.5 5.5 Z" fill="#000"/></svg>
<svg style="left:522px;top:79px" width="16" height="16" viewBox="0 0 16 16"><g shape-rendering="crispEdges"><path d="M0 1.5 H4.5 V5.5 H5.5 V9.5 H3" fill="none" stroke="#0010F0" stroke-width="1.2" stroke-dasharray="1.2 0.8"/><path d="M6.5 5 V16" stroke="#0010F0" stroke-width="1.2" stroke-dasharray="1.5 1"/><path d="M8.5 0 V16" stroke="#F00000" stroke-width="1.2" stroke-dasharray="3 1"/><path d="M10.5 16 V5.5 H13.5 V1.5 H16 M13.5 5.5 V9.5 H15" fill="none" stroke="#000080" stroke-width="1.3"/></g></svg>
<svg style="left:545px;top:79px" width="16" height="16" viewBox="0 0 16 16"><g shape-rendering="crispEdges"><path d="M0 2.5 H4.5 V9.5 H3 M4.5 5.5 H6.5 V16" fill="none" stroke="#0010F0" stroke-width="1.3"/><path d="M8.5 0 V16" stroke="#F00000" stroke-width="1.2" stroke-dasharray="3 1"/><path d="M10.5 16 V5.5 H13.5 V2.5 H16 M13.5 5.5 V9.5 H15" fill="none" stroke="#0010F0" stroke-width="1.3"/></g></svg>
<svg style="left:568px;top:79px" width="16" height="16" viewBox="0 0 16 16"><rect x="5.5" y="0.5" width="10" height="9" fill="#fff" stroke="#000" stroke-width="1.2"/><rect x="0.5" y="5.5" width="10" height="9" fill="#FCE8D8" stroke="#000" stroke-width="1.2"/></svg>
<svg style="left:591px;top:79px" width="16" height="16" viewBox="0 0 16 16"><path d="M2 10 L9 3 H15 L9 10 Z" fill="#fff" stroke="#000" stroke-width="1"/><path d="M2 10 H9 V13 H2 Z" fill="#D0D0D0" stroke="#000" stroke-width="1"/><path d="M9 13 L15 7 V3" fill="#A0A0A0" stroke="#000" stroke-width="1"/><rect x="0" y="14" width="16" height="2" fill="#909090"/></svg>
<svg style="left:614px;top:79px" width="16" height="16" viewBox="0 0 16 16"><path d="M1 9 V14 M1 11.5 H14" stroke="#000" stroke-width="2.4"/><path d="M3 4.5 H12 M10 2 L13 4.5 L10 7" stroke="#F00010" stroke-width="1.5" fill="none"/></svg>
<svg style="left:637px;top:79px" width="17" height="16" viewBox="0 0 17 16"><text x="0" y="9" font-family="Liberation Sans" font-size="11" font-weight="bold" fill="#E00000">?</text><path d="M5 15 L7 11 L14 4 L16 6 L9 13 Z" fill="#FFF060" stroke="#000" stroke-width="0.8"/><path d="M14 4 L16 6" stroke="#E00000" stroke-width="1.8"/><path d="M8 14 L15 9" stroke="#A0A0A0" stroke-width="1.3"/></svg>
<div class="a" style="left:660px;top:77px;width:1px;height:18px;background:#C5C1AE"></div>
<div class="a" style="left:661px;top:77px;width:1px;height:18px;background:#FFFFFF"></div>
<svg style="left:669px;top:79px" width="16" height="16" viewBox="0 0 16 16"><path d="M1 8 L5 12 L14 1.5" fill="none" stroke="#0A1EA8" stroke-width="2.2"/><path d="M3 12 L6 14 L14 5" fill="none" stroke="#A0A0A0" stroke-width="1"/></svg>
<div class="a" style="left:688px;top:76px;width:23px;height:22px;border:1px solid #8DA2C8;border-radius:3px;background:linear-gradient(to bottom,#FFFFFF 0%,#F4F3EE 100%)"></div>
<svg style="left:691px;top:79px" width="16" height="16" viewBox="0 0 16 16"><path d="M1 7 L4 11 L11 1.5" fill="none" stroke="#0A1EA8" stroke-width="2.2"/><text x="9" y="14" font-family="Liberation Sans" font-size="11" font-weight="bold" fill="#E00000">?</text></svg>
<div class="a" style="left:712px;top:76px;width:22px;height:22px;border:1px solid #8DA2C8;border-radius:3px;background:linear-gradient(to bottom,#FFFFFF 0%,#F4F3EE 100%)"></div>
<svg style="left:715px;top:79px" width="16" height="16" viewBox="0 0 16 16"><circle cx="8" cy="8" r="7.4" fill="#E00010"/><circle cx="8" cy="8" r="5.8" fill="none" stroke="#fff" stroke-width="0.8"/><path d="M5 5 L11 11 M11 5 L5 11" stroke="#fff" stroke-width="2.4"/></svg>
<div class="a" style="left:997px;top:77px;width:1px;height:18px;background:#C5C1AE"></div>
<div class="a" style="left:998px;top:77px;width:1px;height:18px;background:#FFFFFF"></div>
<svg style="left:1004px;top:79px" width="16" height="16" viewBox="0 0 16 16"><path d="M3 7 L7 2 H13 L15 4 L11 7 Z" fill="#F8E830" stroke="#000" stroke-width="0.7"/><rect x="14" y="1.5" width="2" height="4" fill="#0A1E80"/><rect x="0.5" y="9.5" width="15" height="6" fill="#C8C8C8" stroke="#404040"/><path d="M2 12 L3 14 L5 11 M7 12 L8 14 L10 11 M11 12 L12 14 L14 11" stroke="#E00000" fill="none" stroke-width="1"/></svg>
<svg style="left:243px;top:129px" width="16" height="16" viewBox="0 0 16 16"><path d="M4.5 5.5 L13.5 14.5" stroke="#000" stroke-width="3"/><path d="M5 6 L13 14" stroke="#E8E8E8" stroke-width="1" stroke-dasharray="1 1"/><path d="M0.5 3.5 L3 1 L4 2 L2.5 3.5 L4 5 L5.5 3.5 L6.5 4.5 L4 7 Z" fill="#000" stroke="#000" stroke-width="0.8"/><path d="M2.5 14.5 L10.5 6.5" stroke="#000" stroke-width="3"/><path d="M3 14 L10 7" stroke="#C01010" stroke-width="1" stroke-dasharray="1.5 1"/><path d="M7.5 3 L10 0.5 L13 1 L15.5 4 L14 6 L12 4.5 L10 6.5 Z" fill="#807800" stroke="#000" stroke-width="0.9"/></svg>
<svg style="left:244px;top:152px" width="14" height="14" viewBox="0 0 14 14"><rect x="1.5" y="1.5" width="11" height="11" fill="none" stroke="#807C00" stroke-width="2.2"/></svg>
<svg style="left:243px;top:173px" width="16" height="16" viewBox="0 0 16 16"><path d="M1.5 1.5 H2.5 M7.5 1.5 H8.5 M13.5 1.5 H14.5 M1.5 7.5 H2.5 M13.5 7.5 H14.5 M1.5 13.5 H2.5 M7.5 13.5 H8.5 M13.5 13.5 H14.5" stroke="#1030F0" stroke-width="1.6"/><rect x="4.5" y="4.5" width="6" height="6" fill="none" stroke="#807C00" stroke-width="1.4"/><rect x="7" y="7" width="1.5" height="1.5" fill="#1030F0"/></svg>
<svg style="left:243px;top:195px" width="17" height="17" viewBox="0 0 17 17"><rect x="1" y="0.5" width="3" height="3" fill="none" stroke="#1030F0" stroke-width="1.2"/><path d="M5 2 H10" stroke="#1030F0" stroke-width="1.4"/><rect x="11" y="1" width="4" height="3" fill="none" stroke="#1030F0" stroke-width="1.2"/><rect x="2.5" y="5.5" width="12" height="10" fill="none" stroke="#808080" stroke-width="0.8" stroke-dasharray="1 1"/><rect x="4" y="7" width="3" height="3" fill="none" stroke="#F00000" stroke-width="1.2"/><path d="M8 8.5 H11 V11" stroke="#F00000" stroke-width="1.2" fill="none"/><rect x="10" y="11" width="3" height="3" fill="none" stroke="#F00000" stroke-width="1.2"/></svg>
<svg style="left:244px;top:217px" width="16" height="16" viewBox="0 0 16 16"><rect x="1.5" y="0.5" width="12" height="7" fill="#F4F4F4" stroke="#606060" stroke-width="1"/><text x="7.5" y="6" font-family="Liberation Mono" font-size="5" font-weight="bold" text-anchor="middle" fill="#404040">1234</text><path d="M0.5 11.5 H15.5 M0.5 9 V14 M15.5 9 V14" stroke="#1030F0" stroke-width="1.3"/></svg>
<svg style="left:243px;top:238px" width="17" height="17" viewBox="0 0 17 17"><path d="M0 4.5 H16 M0 11.5 H16 M4.5 0 V16 M11.5 0 V16" stroke="#808080" stroke-width="1.2"/><path d="M0 8 H16 M8 0 V16" stroke="#000" stroke-width="1.4"/></svg>
<div class="a" style="left:240px;top:258px;width:23px;height:22px;border:1px solid #8DA2C8;border-radius:3px;background:linear-gradient(to bottom,#FFFFFF 0%,#F4F3EE 100%)"></div>
<svg style="left:244px;top:262px" width="16" height="14" viewBox="0 0 16 14"><path d="M2 1.5 H13 Q14.5 1.5 14.5 3 V8 Q14.5 9.5 13 9.5 H6 L3 13 V9.5 H2 Q0.5 9.5 0.5 8 V3 Q0.5 1.5 2 1.5 Z" fill="#FFF89A" stroke="#606060" stroke-width="1"/></svg>
<div class="a" style="left:240px;top:282px;width:23px;height:1px;background:#C5C1AE"></div>
<div class="a" style="left:240px;top:283px;width:23px;height:1px;background:#FFFFFF"></div>
<svg style="left:243px;top:287px" width="16" height="13" viewBox="0 0 16 13"><path d="M4 0.5 L12 8 M12 0.5 L4 8" stroke="#ACA899" stroke-width="1.6"/><path d="M0 10.5 H16" stroke="#ACA899" stroke-width="1.2"/><rect x="6.5" y="9" width="3" height="3" fill="#ACA899"/></svg>
<svg style="left:243px;top:311px" width="16" height="10" viewBox="0 0 16 10"><path d="M4 0.5 L12 9 M12 0.5 L4 9" stroke="#ACA899" stroke-width="2"/><path d="M0 5 H16" stroke="#ACA899" stroke-width="2.4"/></svg>
<div class="a" style="left:240px;top:330px;width:23px;height:1px;background:#C5C1AE"></div>
<div class="a" style="left:240px;top:331px;width:23px;height:1px;background:#FFFFFF"></div>
<svg style="left:243px;top:340px" width="16" height="8" viewBox="0 0 16 8"><path d="M1 4 H12" stroke="#ACA899" stroke-width="3"/><circle cx="2" cy="4" r="2" fill="#ACA899"/><path d="M11 0 L16 4 L11 8 Z" fill="#ACA899"/></svg>
<svg style="left:247px;top:353px" width="8" height="20" viewBox="0 0 8 20"><path d="M4 3 V18" stroke="#ACA899" stroke-width="3"/><circle cx="4" cy="17.5" r="2.3" fill="#ACA899"/><path d="M0 5 L4 0 L8 5 Z" fill="#ACA899"/></svg>
<svg style="left:243px;top:384px" width="16" height="8" viewBox="0 0 16 8"><path d="M3 4 H13" stroke="#ACA899" stroke-width="3"/><circle cx="14" cy="4" r="2.2" fill="#ACA899"/><path d="M5 0 L0 4 L5 8 Z" fill="#ACA899"/></svg>
<svg style="left:247px;top:400px" width="8" height="18" viewBox="0 0 8 18"><path d="M4 2 V14" stroke="#ACA899" stroke-width="3"/><circle cx="4" cy="2.5" r="2.3" fill="#ACA899"/><path d="M0 12 L4 17 L8 12 Z" fill="#ACA899"/></svg>
<svg style="left:243px;top:423px" width="16" height="16" viewBox="0 0 16 16"><text x="1" y="7" font-family="Liberation Sans" font-size="8" font-weight="bold" fill="#ACA899">?</text><path d="M3 13 L12 5" stroke="#ACA899" stroke-width="2.2"/><circle cx="3" cy="13" r="2.3" fill="#ACA899"/><rect x="10" y="2" width="5" height="5" fill="#ACA899"/></svg>
<div class="a" style="left:240px;top:445px;width:23px;height:1px;background:#C5C1AE"></div>
<div class="a" style="left:240px;top:446px;width:23px;height:1px;background:#FFFFFF"></div>
<svg style="left:244px;top:449px" width="14" height="17" viewBox="0 0 14 17"><rect x="4" y="4" width="7" height="12" fill="#ACA899"/><path d="M3 3 V7 M1.5 4.5 L3 2 L4.5 4.5" stroke="#ACA899" stroke-width="1.5" fill="none"/></svg>
<svg style="left:244px;top:470px" width="14" height="18" viewBox="0 0 14 18"><rect x="3.5" y="5" width="7" height="13" rx="1" fill="#ACA899"/><path d="M7 1 V5 M4.5 3.5 L7 0.5 L9.5 3.5" stroke="#ACA899" stroke-width="1.5" fill="none"/></svg>
<svg style="left:244px;top:492px" width="14" height="18" viewBox="0 0 14 18"><rect x="3" y="5" width="7" height="12" fill="#ACA899"/><path d="M10.5 1 V6 M9 3.5 L10.5 0.5 L12 3.5" stroke="#ACA899" stroke-width="1.5" fill="none"/></svg>
</body></html>
